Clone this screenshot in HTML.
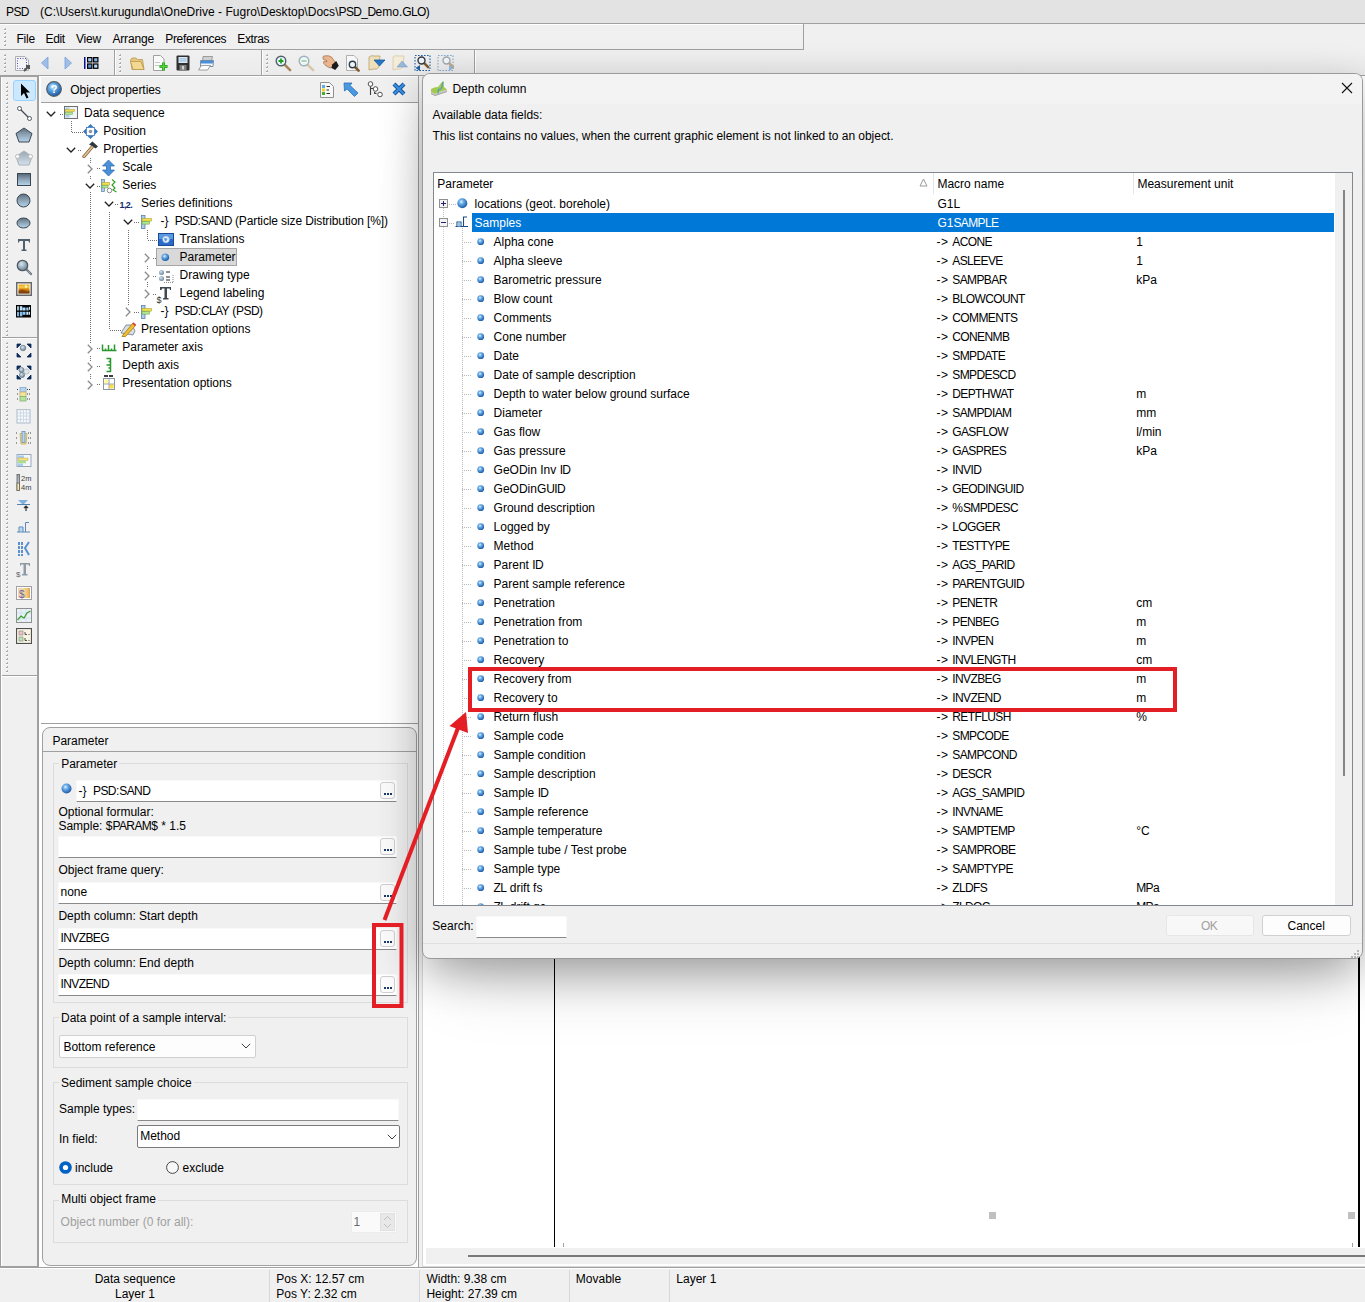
<!DOCTYPE html>
<html><head><meta charset="utf-8"><title>PSD</title>
<style>
html,body{margin:0;padding:0;}
body{width:1365px;height:1302px;position:relative;overflow:hidden;background:#f0f0f0;font-family:"Liberation Sans",sans-serif;font-size:12px;line-height:18px;color:#000;}
div{white-space:nowrap;}
</style></head><body>
<div style="position:absolute;left:0px;top:0px;width:1365px;height:23px;background:#e3e3e3"></div>
<div style="position:absolute;left:0px;top:23px;width:1365px;height:1px;background:#a0a0a0"></div>
<div style="position:absolute;left:6px;top:3.14px;font-size:12px;color:#000;letter-spacing:0px"><span style="letter-spacing:-0.6px">PSD</span></div>
<div style="position:absolute;left:40px;top:3.14px;font-size:12px;color:#000;letter-spacing:0.02px">(C:\Users\t.kurugundla\OneDrive - Fugro\Desktop\Docs\<span style="letter-spacing:-0.6px">PSD_D</span>emo.<span style="letter-spacing:-0.6px">GLO</span>)</div>
<div style="position:absolute;left:0px;top:24px;width:1365px;height:51px;background:linear-gradient(#f0f0f0 0%,#f0f0f0 60%,#e9e9e9 100%)"></div>
<div style="position:absolute;left:0px;top:24px;width:803px;height:25px;background:#f0f0f0;border-top:1px solid #fff;box-sizing:border-box"></div>
<div style="position:absolute;left:803px;top:24px;width:1px;height:26px;background:#a0a0a0"></div>
<div style="position:absolute;left:0px;top:49px;width:804px;height:1px;background:#a0a0a0"></div>
<div style="position:absolute;left:5px;top:28px;width:1px;height:1px;background:#b8b8b8"></div>
<div style="position:absolute;left:4px;top:29px;width:2px;height:1px;background:#a8a8a8"></div>
<div style="position:absolute;left:4px;top:30px;width:2px;height:1px;background:#fafafa"></div>
<div style="position:absolute;left:5px;top:32px;width:1px;height:1px;background:#b8b8b8"></div>
<div style="position:absolute;left:4px;top:33px;width:2px;height:1px;background:#a8a8a8"></div>
<div style="position:absolute;left:4px;top:34px;width:2px;height:1px;background:#fafafa"></div>
<div style="position:absolute;left:5px;top:36px;width:1px;height:1px;background:#b8b8b8"></div>
<div style="position:absolute;left:4px;top:37px;width:2px;height:1px;background:#a8a8a8"></div>
<div style="position:absolute;left:4px;top:38px;width:2px;height:1px;background:#fafafa"></div>
<div style="position:absolute;left:5px;top:40px;width:1px;height:1px;background:#b8b8b8"></div>
<div style="position:absolute;left:4px;top:41px;width:2px;height:1px;background:#a8a8a8"></div>
<div style="position:absolute;left:4px;top:42px;width:2px;height:1px;background:#fafafa"></div>
<div style="position:absolute;left:5px;top:44px;width:1px;height:1px;background:#b8b8b8"></div>
<div style="position:absolute;left:4px;top:45px;width:2px;height:1px;background:#a8a8a8"></div>
<div style="position:absolute;left:4px;top:46px;width:2px;height:1px;background:#fafafa"></div>
<div style="position:absolute;left:16.4px;top:30.24px;font-size:12px;color:#000;letter-spacing:-0.15px">File</div>
<div style="position:absolute;left:45.5px;top:30.24px;font-size:12px;color:#000;letter-spacing:-0.35px">Edit</div>
<div style="position:absolute;left:75.9px;top:30.24px;font-size:12px;color:#000;letter-spacing:-0.15px">View</div>
<div style="position:absolute;left:112.4px;top:30.24px;font-size:12px;color:#000;letter-spacing:-0.15px">Arrange</div>
<div style="position:absolute;left:165.3px;top:30.24px;font-size:12px;color:#000;letter-spacing:-0.35px">Preferences</div>
<div style="position:absolute;left:237.3px;top:30.24px;font-size:12px;color:#000;letter-spacing:-0.35px">Extras</div>
<div style="position:absolute;left:0px;top:50px;width:1365px;height:25px;background:linear-gradient(#f0f0f0,#ebebeb)"></div>
<div style="position:absolute;left:0px;top:75px;width:1365px;height:1px;background:#a0a0a0"></div>
<div style="position:absolute;left:114px;top:50px;width:1px;height:25px;background:#a0a0a0"></div>
<div style="position:absolute;left:115px;top:50px;width:1px;height:25px;background:#fff"></div>
<div style="position:absolute;left:261px;top:50px;width:1px;height:25px;background:#a0a0a0"></div>
<div style="position:absolute;left:262px;top:50px;width:1px;height:25px;background:#fff"></div>
<div style="position:absolute;left:474px;top:50px;width:1px;height:25px;background:#a0a0a0"></div>
<div style="position:absolute;left:475px;top:50px;width:1px;height:25px;background:#fff"></div>
<div style="position:absolute;left:5px;top:54px;width:1px;height:1px;background:#b8b8b8"></div>
<div style="position:absolute;left:4px;top:55px;width:2px;height:1px;background:#a8a8a8"></div>
<div style="position:absolute;left:4px;top:56px;width:2px;height:1px;background:#fafafa"></div>
<div style="position:absolute;left:5px;top:58px;width:1px;height:1px;background:#b8b8b8"></div>
<div style="position:absolute;left:4px;top:59px;width:2px;height:1px;background:#a8a8a8"></div>
<div style="position:absolute;left:4px;top:60px;width:2px;height:1px;background:#fafafa"></div>
<div style="position:absolute;left:5px;top:62px;width:1px;height:1px;background:#b8b8b8"></div>
<div style="position:absolute;left:4px;top:63px;width:2px;height:1px;background:#a8a8a8"></div>
<div style="position:absolute;left:4px;top:64px;width:2px;height:1px;background:#fafafa"></div>
<div style="position:absolute;left:5px;top:66px;width:1px;height:1px;background:#b8b8b8"></div>
<div style="position:absolute;left:4px;top:67px;width:2px;height:1px;background:#a8a8a8"></div>
<div style="position:absolute;left:4px;top:68px;width:2px;height:1px;background:#fafafa"></div>
<div style="position:absolute;left:5px;top:70px;width:1px;height:1px;background:#b8b8b8"></div>
<div style="position:absolute;left:4px;top:71px;width:2px;height:1px;background:#a8a8a8"></div>
<div style="position:absolute;left:4px;top:72px;width:2px;height:1px;background:#fafafa"></div>
<div style="position:absolute;left:120px;top:54px;width:1px;height:1px;background:#b8b8b8"></div>
<div style="position:absolute;left:119px;top:55px;width:2px;height:1px;background:#a8a8a8"></div>
<div style="position:absolute;left:119px;top:56px;width:2px;height:1px;background:#fafafa"></div>
<div style="position:absolute;left:120px;top:58px;width:1px;height:1px;background:#b8b8b8"></div>
<div style="position:absolute;left:119px;top:59px;width:2px;height:1px;background:#a8a8a8"></div>
<div style="position:absolute;left:119px;top:60px;width:2px;height:1px;background:#fafafa"></div>
<div style="position:absolute;left:120px;top:62px;width:1px;height:1px;background:#b8b8b8"></div>
<div style="position:absolute;left:119px;top:63px;width:2px;height:1px;background:#a8a8a8"></div>
<div style="position:absolute;left:119px;top:64px;width:2px;height:1px;background:#fafafa"></div>
<div style="position:absolute;left:120px;top:66px;width:1px;height:1px;background:#b8b8b8"></div>
<div style="position:absolute;left:119px;top:67px;width:2px;height:1px;background:#a8a8a8"></div>
<div style="position:absolute;left:119px;top:68px;width:2px;height:1px;background:#fafafa"></div>
<div style="position:absolute;left:120px;top:70px;width:1px;height:1px;background:#b8b8b8"></div>
<div style="position:absolute;left:119px;top:71px;width:2px;height:1px;background:#a8a8a8"></div>
<div style="position:absolute;left:119px;top:72px;width:2px;height:1px;background:#fafafa"></div>
<div style="position:absolute;left:267px;top:54px;width:1px;height:1px;background:#b8b8b8"></div>
<div style="position:absolute;left:266px;top:55px;width:2px;height:1px;background:#a8a8a8"></div>
<div style="position:absolute;left:266px;top:56px;width:2px;height:1px;background:#fafafa"></div>
<div style="position:absolute;left:267px;top:58px;width:1px;height:1px;background:#b8b8b8"></div>
<div style="position:absolute;left:266px;top:59px;width:2px;height:1px;background:#a8a8a8"></div>
<div style="position:absolute;left:266px;top:60px;width:2px;height:1px;background:#fafafa"></div>
<div style="position:absolute;left:267px;top:62px;width:1px;height:1px;background:#b8b8b8"></div>
<div style="position:absolute;left:266px;top:63px;width:2px;height:1px;background:#a8a8a8"></div>
<div style="position:absolute;left:266px;top:64px;width:2px;height:1px;background:#fafafa"></div>
<div style="position:absolute;left:267px;top:66px;width:1px;height:1px;background:#b8b8b8"></div>
<div style="position:absolute;left:266px;top:67px;width:2px;height:1px;background:#a8a8a8"></div>
<div style="position:absolute;left:266px;top:68px;width:2px;height:1px;background:#fafafa"></div>
<div style="position:absolute;left:267px;top:70px;width:1px;height:1px;background:#b8b8b8"></div>
<div style="position:absolute;left:266px;top:71px;width:2px;height:1px;background:#a8a8a8"></div>
<div style="position:absolute;left:266px;top:72px;width:2px;height:1px;background:#fafafa"></div>
<svg style="position:absolute;left:15px;top:56px" width="16" height="16" viewBox="0 0 16 16"><path d="M0.5 0.5H10L13.5 4V14.5H0.5Z" fill="#f4f4f6" stroke="#b0b0b0"/><rect x="2.5" y="2.5" width="9" height="10" fill="none" stroke="#5050b0" stroke-dasharray="1 1.5"/><path d="M9 15L13 11M11 10H14V13" stroke="#555" stroke-width="2" fill="none"/></svg>
<svg style="position:absolute;left:41px;top:57px" width="8" height="12" viewBox="0 0 8 12"><path d="M7 0L0.5 6L7 12Z" fill="#9fbfe8" stroke="#7aa0d8" stroke-width="0.8"/></svg>
<svg style="position:absolute;left:64px;top:57px" width="8" height="12" viewBox="0 0 8 12"><path d="M1 0L7.5 6L1 12Z" fill="#9fbfe8" stroke="#7aa0d8" stroke-width="0.8"/></svg>
<svg style="position:absolute;left:84px;top:57px" width="15" height="12" viewBox="0 0 15 12"><rect x="0" y="0" width="1.5" height="12" fill="#101090"/><rect x="3.6" y="0.6" width="4.3" height="4.3" fill="#a8d0f4" stroke="#000" stroke-width="1.2"/><rect x="9.6" y="0.6" width="4.3" height="4.3" fill="#80b0e8" stroke="#000" stroke-width="1.2"/><rect x="3.6" y="7" width="4.3" height="4.3" fill="#5b94d8" stroke="#000" stroke-width="1.2"/><rect x="9.6" y="7" width="4.3" height="4.3" fill="#b8dcf8" stroke="#000" stroke-width="1.2"/></svg>
<svg style="position:absolute;left:130px;top:57px" width="15" height="13" viewBox="0 0 15 13"><path d="M0.5 3L2 1H6L7.5 2.5H12.5L14 12.5H2Z" fill="#e8c878" stroke="#b89850" stroke-width="0.8"/><path d="M0.5 4.5H11L14 12.5H3Z" fill="#f2d890" stroke="#b89850" stroke-width="0.8"/></svg>
<svg style="position:absolute;left:153px;top:55px" width="15" height="16" viewBox="0 0 15 16"><path d="M0.5 0.5H7.5L11 4V15.5H0.5Z" fill="#fafafa" stroke="#a0a0a0"/><rect x="2" y="7" width="5" height="1" fill="#c8c8c8"/><rect x="2" y="10" width="4" height="1" fill="#c8c8c8"/><path d="M6.5 11.5H14.5M10.5 7.5V15.5" stroke="#20a020" stroke-width="3"/><path d="M6.5 11.5H14.5M10.5 7.5V15.5" stroke="#60d040" stroke-width="1.4"/></svg>
<svg style="position:absolute;left:176px;top:55px" width="14" height="16" viewBox="0 0 14 16"><rect x="0.5" y="0.5" width="13" height="15" rx="1" fill="#303030"/><rect x="2.5" y="2" width="9" height="6" fill="#dbe8f4"/><rect x="3.5" y="3.5" width="7" height="0.8" fill="#7aaad8"/><rect x="3.5" y="5.5" width="7" height="0.8" fill="#7aaad8"/><rect x="3.5" y="10" width="7" height="5.5" fill="#808080"/><rect x="6" y="11" width="2" height="3.5" fill="#d0d0d0"/></svg>
<svg style="position:absolute;left:198px;top:56px" width="17" height="15" viewBox="0 0 17 15"><path d="M5 0.5H14.5L13.5 5H4.5Z" fill="#d0d0d0" stroke="#8a8a8a" stroke-width="0.8"/><path d="M2.5 4.5H15.5L15 10.5H2.5Z" fill="#f4f6f8" stroke="#5a7898" stroke-width="0.8"/><path d="M3 4.8H15.2L14.8 7.5H3Z" fill="#4a90d8"/><path d="M3.5 9.5H12.5L9.5 14H0.5Z" fill="#fdfdfd" stroke="#8a8a8a" stroke-width="0.8"/></svg>
<svg style="position:absolute;left:275px;top:55px" width="17" height="17" viewBox="0 0 17 17"><line x1="9.36" y1="9.36" x2="15.12" y2="15.12" stroke="#a8845a" stroke-width="2.6" stroke-linecap="round"/><circle cx="6" cy="6" r="4.8" fill="#e8f4fb" stroke="#50606a" stroke-width="1.4"/><path d="M3.5 6H8.5M6 3.5V8.5" stroke="#20a020" stroke-width="1.8"/></svg>
<svg style="position:absolute;left:298px;top:55px" width="17" height="17" viewBox="0 0 17 17"><line x1="9.36" y1="9.36" x2="15.12" y2="15.12" stroke="#d8c8a8" stroke-width="2.6" stroke-linecap="round"/><circle cx="6" cy="6" r="4.8" fill="#eef6fa" stroke="#a0b0b8" stroke-width="1.4"/><path d="M3.5 6H8.5" stroke="#9ad09a" stroke-width="1.6"/></svg>
<svg style="position:absolute;left:322px;top:55px" width="17" height="16" viewBox="0 0 17 16"><path d="M0.8 3Q0.8 0.5 3.5 0.8H6.5L9.5 2L13.5 7.5L12.5 11.5L8 13L3.5 10.5L1.5 8Q1.2 6 3.2 6.2L5 7L4.2 5L1.8 4.8Z" fill="#eab48c" stroke="#9a6a48" stroke-width="0.7"/><path d="M10.2 9.5L14.2 6L16.8 10.8L13.2 15L9.5 13Z" fill="#1a1a1a"/></svg>
<svg style="position:absolute;left:346px;top:55px" width="15" height="17" viewBox="0 0 15 17"><path d="M0.5 0.5H8L11.5 4V15.5H0.5Z" fill="#f8f8fa" stroke="#b0b0b0"/><line x1="8.74" y1="11.74" x2="12.58" y2="15.58" stroke="#805a30" stroke-width="2.6" stroke-linecap="round"/><circle cx="6.5" cy="9.5" r="3.2" fill="#f0f4f8" stroke="#30404a" stroke-width="1.4"/></svg>
<svg style="position:absolute;left:368px;top:55px" width="17" height="16" viewBox="0 0 17 16"><path d="M1 2Q3 0 6 1H12L11 12Q9 15 5 14L1 15Z" fill="#f0e0b8" stroke="#b8a070" stroke-width="0.8"/><path d="M6 5H17L11.5 11Z" fill="#2878c8" stroke="#1858a0" stroke-width="0.8"/></svg>
<svg style="position:absolute;left:392px;top:55px" width="16" height="16" viewBox="0 0 16 16"><path d="M1 2Q3 0 6 1H12L11 12Q9 15 5 14L1 15Z" fill="#f4ecd8" stroke="#d8c8a8" stroke-width="0.8"/><path d="M5 12H15.5L10.2 6Z" fill="#98b8d8" stroke="#80a0c8" stroke-width="0.6"/></svg>
<svg style="position:absolute;left:414px;top:55px" width="17" height="17" viewBox="0 0 17 17"><rect x="1" y="0.5" width="15" height="15" fill="none" stroke="#2060a8" stroke-width="1.1" stroke-dasharray="1.6 1.4"/><line x1="9.95" y1="7.949999999999999" x2="14.149999999999999" y2="12.149999999999999" stroke="#805a30" stroke-width="2.6" stroke-linecap="round"/><circle cx="7.5" cy="5.5" r="3.5" fill="#f0f4f8" stroke="#303840" stroke-width="1.4"/><path d="M6 10V16L1.5 13Z" fill="#2060a8"/></svg>
<svg style="position:absolute;left:437px;top:55px" width="17" height="17" viewBox="0 0 17 17"><rect x="1" y="0.5" width="15" height="15" fill="none" stroke="#80a8d0" stroke-width="1.1" stroke-dasharray="1.6 1.4"/><line x1="11.95" y1="7.949999999999999" x2="16.15" y2="12.149999999999999" stroke="#c0a888" stroke-width="2.6" stroke-linecap="round"/><circle cx="9.5" cy="5.5" r="3.5" fill="#f4f6f8" stroke="#a0a8b0" stroke-width="1.4"/><path d="M12 10V16L16.5 13Z" fill="#90b8e0"/></svg>
<svg width="0" height="0" style="position:absolute"><defs>
<linearGradient id="gsteel" x1="0" y1="0" x2="0" y2="1"><stop offset="0" stop-color="#5d6f7e"/><stop offset="0.45" stop-color="#8aa0b2"/><stop offset="1" stop-color="#b6d4ec"/></linearGradient>
<linearGradient id="gsteel2" x1="0" y1="0" x2="0" y2="1"><stop offset="0" stop-color="#9aa6b0"/><stop offset="1" stop-color="#d4e2ee"/></linearGradient>
<radialGradient id="gball" cx="0.4" cy="0.35" r="0.65"><stop offset="0" stop-color="#e8f4ff"/><stop offset="0.35" stop-color="#6aaee8"/><stop offset="1" stop-color="#1c5aa8"/></radialGradient>
<radialGradient id="gball2" cx="0.4" cy="0.35" r="0.65"><stop offset="0" stop-color="#d8e6f0"/><stop offset="1" stop-color="#6a8498"/></radialGradient>
<linearGradient id="gsun" x1="0" y1="0" x2="0" y2="1"><stop offset="0" stop-color="#f8d060"/><stop offset="0.6" stop-color="#e89020"/><stop offset="1" stop-color="#703010"/></linearGradient>
</defs></svg>
<div style="position:absolute;left:0px;top:76px;width:39px;height:1191px;background:#f0f0f0"></div>
<div style="position:absolute;left:0px;top:76px;width:1px;height:1191px;background:#a0a0a0"></div>
<div style="position:absolute;left:1px;top:77px;width:1px;height:1189px;background:#fff"></div>
<div style="position:absolute;left:0px;top:76px;width:39px;height:1px;background:#a0a0a0"></div>
<div style="position:absolute;left:37px;top:76px;width:2px;height:1191px;background:#a0a0a0"></div>
<div style="position:absolute;left:0px;top:1266px;width:39px;height:1px;background:#a0a0a0"></div>
<div style="position:absolute;left:2px;top:337px;width:35px;height:1px;background:#a0a0a0"></div>
<div style="position:absolute;left:2px;top:338px;width:35px;height:1px;background:#fff"></div>
<div style="position:absolute;left:2px;top:675px;width:35px;height:1px;background:#a0a0a0"></div>
<div style="position:absolute;left:2px;top:676px;width:35px;height:1px;background:#fff"></div>
<div style="position:absolute;left:7px;top:82px;width:1px;height:1px;background:#b8b8b8"></div>
<div style="position:absolute;left:6px;top:83px;width:2px;height:1px;background:#a8a8a8"></div>
<div style="position:absolute;left:6px;top:84px;width:2px;height:1px;background:#fafafa"></div>
<div style="position:absolute;left:7px;top:86px;width:1px;height:1px;background:#b8b8b8"></div>
<div style="position:absolute;left:6px;top:87px;width:2px;height:1px;background:#a8a8a8"></div>
<div style="position:absolute;left:6px;top:88px;width:2px;height:1px;background:#fafafa"></div>
<div style="position:absolute;left:7px;top:90px;width:1px;height:1px;background:#b8b8b8"></div>
<div style="position:absolute;left:6px;top:91px;width:2px;height:1px;background:#a8a8a8"></div>
<div style="position:absolute;left:6px;top:92px;width:2px;height:1px;background:#fafafa"></div>
<div style="position:absolute;left:7px;top:94px;width:1px;height:1px;background:#b8b8b8"></div>
<div style="position:absolute;left:6px;top:95px;width:2px;height:1px;background:#a8a8a8"></div>
<div style="position:absolute;left:6px;top:96px;width:2px;height:1px;background:#fafafa"></div>
<div style="position:absolute;left:7px;top:98px;width:1px;height:1px;background:#b8b8b8"></div>
<div style="position:absolute;left:6px;top:99px;width:2px;height:1px;background:#a8a8a8"></div>
<div style="position:absolute;left:6px;top:100px;width:2px;height:1px;background:#fafafa"></div>
<div style="position:absolute;left:7px;top:102px;width:1px;height:1px;background:#b8b8b8"></div>
<div style="position:absolute;left:6px;top:103px;width:2px;height:1px;background:#a8a8a8"></div>
<div style="position:absolute;left:6px;top:104px;width:2px;height:1px;background:#fafafa"></div>
<div style="position:absolute;left:7px;top:106px;width:1px;height:1px;background:#b8b8b8"></div>
<div style="position:absolute;left:6px;top:107px;width:2px;height:1px;background:#a8a8a8"></div>
<div style="position:absolute;left:6px;top:108px;width:2px;height:1px;background:#fafafa"></div>
<div style="position:absolute;left:7px;top:110px;width:1px;height:1px;background:#b8b8b8"></div>
<div style="position:absolute;left:6px;top:111px;width:2px;height:1px;background:#a8a8a8"></div>
<div style="position:absolute;left:6px;top:112px;width:2px;height:1px;background:#fafafa"></div>
<div style="position:absolute;left:7px;top:114px;width:1px;height:1px;background:#b8b8b8"></div>
<div style="position:absolute;left:6px;top:115px;width:2px;height:1px;background:#a8a8a8"></div>
<div style="position:absolute;left:6px;top:116px;width:2px;height:1px;background:#fafafa"></div>
<div style="position:absolute;left:7px;top:118px;width:1px;height:1px;background:#b8b8b8"></div>
<div style="position:absolute;left:6px;top:119px;width:2px;height:1px;background:#a8a8a8"></div>
<div style="position:absolute;left:6px;top:120px;width:2px;height:1px;background:#fafafa"></div>
<div style="position:absolute;left:7px;top:122px;width:1px;height:1px;background:#b8b8b8"></div>
<div style="position:absolute;left:6px;top:123px;width:2px;height:1px;background:#a8a8a8"></div>
<div style="position:absolute;left:6px;top:124px;width:2px;height:1px;background:#fafafa"></div>
<div style="position:absolute;left:7px;top:126px;width:1px;height:1px;background:#b8b8b8"></div>
<div style="position:absolute;left:6px;top:127px;width:2px;height:1px;background:#a8a8a8"></div>
<div style="position:absolute;left:6px;top:128px;width:2px;height:1px;background:#fafafa"></div>
<div style="position:absolute;left:7px;top:130px;width:1px;height:1px;background:#b8b8b8"></div>
<div style="position:absolute;left:6px;top:131px;width:2px;height:1px;background:#a8a8a8"></div>
<div style="position:absolute;left:6px;top:132px;width:2px;height:1px;background:#fafafa"></div>
<div style="position:absolute;left:7px;top:134px;width:1px;height:1px;background:#b8b8b8"></div>
<div style="position:absolute;left:6px;top:135px;width:2px;height:1px;background:#a8a8a8"></div>
<div style="position:absolute;left:6px;top:136px;width:2px;height:1px;background:#fafafa"></div>
<div style="position:absolute;left:7px;top:138px;width:1px;height:1px;background:#b8b8b8"></div>
<div style="position:absolute;left:6px;top:139px;width:2px;height:1px;background:#a8a8a8"></div>
<div style="position:absolute;left:6px;top:140px;width:2px;height:1px;background:#fafafa"></div>
<div style="position:absolute;left:7px;top:142px;width:1px;height:1px;background:#b8b8b8"></div>
<div style="position:absolute;left:6px;top:143px;width:2px;height:1px;background:#a8a8a8"></div>
<div style="position:absolute;left:6px;top:144px;width:2px;height:1px;background:#fafafa"></div>
<div style="position:absolute;left:7px;top:146px;width:1px;height:1px;background:#b8b8b8"></div>
<div style="position:absolute;left:6px;top:147px;width:2px;height:1px;background:#a8a8a8"></div>
<div style="position:absolute;left:6px;top:148px;width:2px;height:1px;background:#fafafa"></div>
<div style="position:absolute;left:7px;top:150px;width:1px;height:1px;background:#b8b8b8"></div>
<div style="position:absolute;left:6px;top:151px;width:2px;height:1px;background:#a8a8a8"></div>
<div style="position:absolute;left:6px;top:152px;width:2px;height:1px;background:#fafafa"></div>
<div style="position:absolute;left:7px;top:154px;width:1px;height:1px;background:#b8b8b8"></div>
<div style="position:absolute;left:6px;top:155px;width:2px;height:1px;background:#a8a8a8"></div>
<div style="position:absolute;left:6px;top:156px;width:2px;height:1px;background:#fafafa"></div>
<div style="position:absolute;left:7px;top:158px;width:1px;height:1px;background:#b8b8b8"></div>
<div style="position:absolute;left:6px;top:159px;width:2px;height:1px;background:#a8a8a8"></div>
<div style="position:absolute;left:6px;top:160px;width:2px;height:1px;background:#fafafa"></div>
<div style="position:absolute;left:7px;top:162px;width:1px;height:1px;background:#b8b8b8"></div>
<div style="position:absolute;left:6px;top:163px;width:2px;height:1px;background:#a8a8a8"></div>
<div style="position:absolute;left:6px;top:164px;width:2px;height:1px;background:#fafafa"></div>
<div style="position:absolute;left:7px;top:166px;width:1px;height:1px;background:#b8b8b8"></div>
<div style="position:absolute;left:6px;top:167px;width:2px;height:1px;background:#a8a8a8"></div>
<div style="position:absolute;left:6px;top:168px;width:2px;height:1px;background:#fafafa"></div>
<div style="position:absolute;left:7px;top:170px;width:1px;height:1px;background:#b8b8b8"></div>
<div style="position:absolute;left:6px;top:171px;width:2px;height:1px;background:#a8a8a8"></div>
<div style="position:absolute;left:6px;top:172px;width:2px;height:1px;background:#fafafa"></div>
<div style="position:absolute;left:7px;top:174px;width:1px;height:1px;background:#b8b8b8"></div>
<div style="position:absolute;left:6px;top:175px;width:2px;height:1px;background:#a8a8a8"></div>
<div style="position:absolute;left:6px;top:176px;width:2px;height:1px;background:#fafafa"></div>
<div style="position:absolute;left:7px;top:178px;width:1px;height:1px;background:#b8b8b8"></div>
<div style="position:absolute;left:6px;top:179px;width:2px;height:1px;background:#a8a8a8"></div>
<div style="position:absolute;left:6px;top:180px;width:2px;height:1px;background:#fafafa"></div>
<div style="position:absolute;left:7px;top:182px;width:1px;height:1px;background:#b8b8b8"></div>
<div style="position:absolute;left:6px;top:183px;width:2px;height:1px;background:#a8a8a8"></div>
<div style="position:absolute;left:6px;top:184px;width:2px;height:1px;background:#fafafa"></div>
<div style="position:absolute;left:7px;top:186px;width:1px;height:1px;background:#b8b8b8"></div>
<div style="position:absolute;left:6px;top:187px;width:2px;height:1px;background:#a8a8a8"></div>
<div style="position:absolute;left:6px;top:188px;width:2px;height:1px;background:#fafafa"></div>
<div style="position:absolute;left:7px;top:190px;width:1px;height:1px;background:#b8b8b8"></div>
<div style="position:absolute;left:6px;top:191px;width:2px;height:1px;background:#a8a8a8"></div>
<div style="position:absolute;left:6px;top:192px;width:2px;height:1px;background:#fafafa"></div>
<div style="position:absolute;left:7px;top:194px;width:1px;height:1px;background:#b8b8b8"></div>
<div style="position:absolute;left:6px;top:195px;width:2px;height:1px;background:#a8a8a8"></div>
<div style="position:absolute;left:6px;top:196px;width:2px;height:1px;background:#fafafa"></div>
<div style="position:absolute;left:7px;top:198px;width:1px;height:1px;background:#b8b8b8"></div>
<div style="position:absolute;left:6px;top:199px;width:2px;height:1px;background:#a8a8a8"></div>
<div style="position:absolute;left:6px;top:200px;width:2px;height:1px;background:#fafafa"></div>
<div style="position:absolute;left:7px;top:202px;width:1px;height:1px;background:#b8b8b8"></div>
<div style="position:absolute;left:6px;top:203px;width:2px;height:1px;background:#a8a8a8"></div>
<div style="position:absolute;left:6px;top:204px;width:2px;height:1px;background:#fafafa"></div>
<div style="position:absolute;left:7px;top:206px;width:1px;height:1px;background:#b8b8b8"></div>
<div style="position:absolute;left:6px;top:207px;width:2px;height:1px;background:#a8a8a8"></div>
<div style="position:absolute;left:6px;top:208px;width:2px;height:1px;background:#fafafa"></div>
<div style="position:absolute;left:7px;top:210px;width:1px;height:1px;background:#b8b8b8"></div>
<div style="position:absolute;left:6px;top:211px;width:2px;height:1px;background:#a8a8a8"></div>
<div style="position:absolute;left:6px;top:212px;width:2px;height:1px;background:#fafafa"></div>
<div style="position:absolute;left:7px;top:214px;width:1px;height:1px;background:#b8b8b8"></div>
<div style="position:absolute;left:6px;top:215px;width:2px;height:1px;background:#a8a8a8"></div>
<div style="position:absolute;left:6px;top:216px;width:2px;height:1px;background:#fafafa"></div>
<div style="position:absolute;left:7px;top:218px;width:1px;height:1px;background:#b8b8b8"></div>
<div style="position:absolute;left:6px;top:219px;width:2px;height:1px;background:#a8a8a8"></div>
<div style="position:absolute;left:6px;top:220px;width:2px;height:1px;background:#fafafa"></div>
<div style="position:absolute;left:7px;top:222px;width:1px;height:1px;background:#b8b8b8"></div>
<div style="position:absolute;left:6px;top:223px;width:2px;height:1px;background:#a8a8a8"></div>
<div style="position:absolute;left:6px;top:224px;width:2px;height:1px;background:#fafafa"></div>
<div style="position:absolute;left:7px;top:226px;width:1px;height:1px;background:#b8b8b8"></div>
<div style="position:absolute;left:6px;top:227px;width:2px;height:1px;background:#a8a8a8"></div>
<div style="position:absolute;left:6px;top:228px;width:2px;height:1px;background:#fafafa"></div>
<div style="position:absolute;left:7px;top:230px;width:1px;height:1px;background:#b8b8b8"></div>
<div style="position:absolute;left:6px;top:231px;width:2px;height:1px;background:#a8a8a8"></div>
<div style="position:absolute;left:6px;top:232px;width:2px;height:1px;background:#fafafa"></div>
<div style="position:absolute;left:7px;top:234px;width:1px;height:1px;background:#b8b8b8"></div>
<div style="position:absolute;left:6px;top:235px;width:2px;height:1px;background:#a8a8a8"></div>
<div style="position:absolute;left:6px;top:236px;width:2px;height:1px;background:#fafafa"></div>
<div style="position:absolute;left:7px;top:238px;width:1px;height:1px;background:#b8b8b8"></div>
<div style="position:absolute;left:6px;top:239px;width:2px;height:1px;background:#a8a8a8"></div>
<div style="position:absolute;left:6px;top:240px;width:2px;height:1px;background:#fafafa"></div>
<div style="position:absolute;left:7px;top:242px;width:1px;height:1px;background:#b8b8b8"></div>
<div style="position:absolute;left:6px;top:243px;width:2px;height:1px;background:#a8a8a8"></div>
<div style="position:absolute;left:6px;top:244px;width:2px;height:1px;background:#fafafa"></div>
<div style="position:absolute;left:7px;top:246px;width:1px;height:1px;background:#b8b8b8"></div>
<div style="position:absolute;left:6px;top:247px;width:2px;height:1px;background:#a8a8a8"></div>
<div style="position:absolute;left:6px;top:248px;width:2px;height:1px;background:#fafafa"></div>
<div style="position:absolute;left:7px;top:250px;width:1px;height:1px;background:#b8b8b8"></div>
<div style="position:absolute;left:6px;top:251px;width:2px;height:1px;background:#a8a8a8"></div>
<div style="position:absolute;left:6px;top:252px;width:2px;height:1px;background:#fafafa"></div>
<div style="position:absolute;left:7px;top:254px;width:1px;height:1px;background:#b8b8b8"></div>
<div style="position:absolute;left:6px;top:255px;width:2px;height:1px;background:#a8a8a8"></div>
<div style="position:absolute;left:6px;top:256px;width:2px;height:1px;background:#fafafa"></div>
<div style="position:absolute;left:7px;top:258px;width:1px;height:1px;background:#b8b8b8"></div>
<div style="position:absolute;left:6px;top:259px;width:2px;height:1px;background:#a8a8a8"></div>
<div style="position:absolute;left:6px;top:260px;width:2px;height:1px;background:#fafafa"></div>
<div style="position:absolute;left:7px;top:262px;width:1px;height:1px;background:#b8b8b8"></div>
<div style="position:absolute;left:6px;top:263px;width:2px;height:1px;background:#a8a8a8"></div>
<div style="position:absolute;left:6px;top:264px;width:2px;height:1px;background:#fafafa"></div>
<div style="position:absolute;left:7px;top:266px;width:1px;height:1px;background:#b8b8b8"></div>
<div style="position:absolute;left:6px;top:267px;width:2px;height:1px;background:#a8a8a8"></div>
<div style="position:absolute;left:6px;top:268px;width:2px;height:1px;background:#fafafa"></div>
<div style="position:absolute;left:7px;top:270px;width:1px;height:1px;background:#b8b8b8"></div>
<div style="position:absolute;left:6px;top:271px;width:2px;height:1px;background:#a8a8a8"></div>
<div style="position:absolute;left:6px;top:272px;width:2px;height:1px;background:#fafafa"></div>
<div style="position:absolute;left:7px;top:274px;width:1px;height:1px;background:#b8b8b8"></div>
<div style="position:absolute;left:6px;top:275px;width:2px;height:1px;background:#a8a8a8"></div>
<div style="position:absolute;left:6px;top:276px;width:2px;height:1px;background:#fafafa"></div>
<div style="position:absolute;left:7px;top:278px;width:1px;height:1px;background:#b8b8b8"></div>
<div style="position:absolute;left:6px;top:279px;width:2px;height:1px;background:#a8a8a8"></div>
<div style="position:absolute;left:6px;top:280px;width:2px;height:1px;background:#fafafa"></div>
<div style="position:absolute;left:7px;top:282px;width:1px;height:1px;background:#b8b8b8"></div>
<div style="position:absolute;left:6px;top:283px;width:2px;height:1px;background:#a8a8a8"></div>
<div style="position:absolute;left:6px;top:284px;width:2px;height:1px;background:#fafafa"></div>
<div style="position:absolute;left:7px;top:286px;width:1px;height:1px;background:#b8b8b8"></div>
<div style="position:absolute;left:6px;top:287px;width:2px;height:1px;background:#a8a8a8"></div>
<div style="position:absolute;left:6px;top:288px;width:2px;height:1px;background:#fafafa"></div>
<div style="position:absolute;left:7px;top:290px;width:1px;height:1px;background:#b8b8b8"></div>
<div style="position:absolute;left:6px;top:291px;width:2px;height:1px;background:#a8a8a8"></div>
<div style="position:absolute;left:6px;top:292px;width:2px;height:1px;background:#fafafa"></div>
<div style="position:absolute;left:7px;top:294px;width:1px;height:1px;background:#b8b8b8"></div>
<div style="position:absolute;left:6px;top:295px;width:2px;height:1px;background:#a8a8a8"></div>
<div style="position:absolute;left:6px;top:296px;width:2px;height:1px;background:#fafafa"></div>
<div style="position:absolute;left:7px;top:298px;width:1px;height:1px;background:#b8b8b8"></div>
<div style="position:absolute;left:6px;top:299px;width:2px;height:1px;background:#a8a8a8"></div>
<div style="position:absolute;left:6px;top:300px;width:2px;height:1px;background:#fafafa"></div>
<div style="position:absolute;left:7px;top:302px;width:1px;height:1px;background:#b8b8b8"></div>
<div style="position:absolute;left:6px;top:303px;width:2px;height:1px;background:#a8a8a8"></div>
<div style="position:absolute;left:6px;top:304px;width:2px;height:1px;background:#fafafa"></div>
<div style="position:absolute;left:7px;top:306px;width:1px;height:1px;background:#b8b8b8"></div>
<div style="position:absolute;left:6px;top:307px;width:2px;height:1px;background:#a8a8a8"></div>
<div style="position:absolute;left:6px;top:308px;width:2px;height:1px;background:#fafafa"></div>
<div style="position:absolute;left:7px;top:310px;width:1px;height:1px;background:#b8b8b8"></div>
<div style="position:absolute;left:6px;top:311px;width:2px;height:1px;background:#a8a8a8"></div>
<div style="position:absolute;left:6px;top:312px;width:2px;height:1px;background:#fafafa"></div>
<div style="position:absolute;left:7px;top:314px;width:1px;height:1px;background:#b8b8b8"></div>
<div style="position:absolute;left:6px;top:315px;width:2px;height:1px;background:#a8a8a8"></div>
<div style="position:absolute;left:6px;top:316px;width:2px;height:1px;background:#fafafa"></div>
<div style="position:absolute;left:7px;top:318px;width:1px;height:1px;background:#b8b8b8"></div>
<div style="position:absolute;left:6px;top:319px;width:2px;height:1px;background:#a8a8a8"></div>
<div style="position:absolute;left:6px;top:320px;width:2px;height:1px;background:#fafafa"></div>
<div style="position:absolute;left:7px;top:322px;width:1px;height:1px;background:#b8b8b8"></div>
<div style="position:absolute;left:6px;top:323px;width:2px;height:1px;background:#a8a8a8"></div>
<div style="position:absolute;left:6px;top:324px;width:2px;height:1px;background:#fafafa"></div>
<div style="position:absolute;left:7px;top:326px;width:1px;height:1px;background:#b8b8b8"></div>
<div style="position:absolute;left:6px;top:327px;width:2px;height:1px;background:#a8a8a8"></div>
<div style="position:absolute;left:6px;top:328px;width:2px;height:1px;background:#fafafa"></div>
<div style="position:absolute;left:7px;top:330px;width:1px;height:1px;background:#b8b8b8"></div>
<div style="position:absolute;left:6px;top:331px;width:2px;height:1px;background:#a8a8a8"></div>
<div style="position:absolute;left:6px;top:332px;width:2px;height:1px;background:#fafafa"></div>
<div style="position:absolute;left:7px;top:334px;width:1px;height:1px;background:#b8b8b8"></div>
<div style="position:absolute;left:6px;top:335px;width:2px;height:1px;background:#a8a8a8"></div>
<div style="position:absolute;left:6px;top:336px;width:2px;height:1px;background:#fafafa"></div>
<div style="position:absolute;left:7px;top:342px;width:1px;height:1px;background:#b8b8b8"></div>
<div style="position:absolute;left:6px;top:343px;width:2px;height:1px;background:#a8a8a8"></div>
<div style="position:absolute;left:6px;top:344px;width:2px;height:1px;background:#fafafa"></div>
<div style="position:absolute;left:7px;top:346px;width:1px;height:1px;background:#b8b8b8"></div>
<div style="position:absolute;left:6px;top:347px;width:2px;height:1px;background:#a8a8a8"></div>
<div style="position:absolute;left:6px;top:348px;width:2px;height:1px;background:#fafafa"></div>
<div style="position:absolute;left:7px;top:350px;width:1px;height:1px;background:#b8b8b8"></div>
<div style="position:absolute;left:6px;top:351px;width:2px;height:1px;background:#a8a8a8"></div>
<div style="position:absolute;left:6px;top:352px;width:2px;height:1px;background:#fafafa"></div>
<div style="position:absolute;left:7px;top:354px;width:1px;height:1px;background:#b8b8b8"></div>
<div style="position:absolute;left:6px;top:355px;width:2px;height:1px;background:#a8a8a8"></div>
<div style="position:absolute;left:6px;top:356px;width:2px;height:1px;background:#fafafa"></div>
<div style="position:absolute;left:7px;top:358px;width:1px;height:1px;background:#b8b8b8"></div>
<div style="position:absolute;left:6px;top:359px;width:2px;height:1px;background:#a8a8a8"></div>
<div style="position:absolute;left:6px;top:360px;width:2px;height:1px;background:#fafafa"></div>
<div style="position:absolute;left:7px;top:362px;width:1px;height:1px;background:#b8b8b8"></div>
<div style="position:absolute;left:6px;top:363px;width:2px;height:1px;background:#a8a8a8"></div>
<div style="position:absolute;left:6px;top:364px;width:2px;height:1px;background:#fafafa"></div>
<div style="position:absolute;left:7px;top:366px;width:1px;height:1px;background:#b8b8b8"></div>
<div style="position:absolute;left:6px;top:367px;width:2px;height:1px;background:#a8a8a8"></div>
<div style="position:absolute;left:6px;top:368px;width:2px;height:1px;background:#fafafa"></div>
<div style="position:absolute;left:7px;top:370px;width:1px;height:1px;background:#b8b8b8"></div>
<div style="position:absolute;left:6px;top:371px;width:2px;height:1px;background:#a8a8a8"></div>
<div style="position:absolute;left:6px;top:372px;width:2px;height:1px;background:#fafafa"></div>
<div style="position:absolute;left:7px;top:374px;width:1px;height:1px;background:#b8b8b8"></div>
<div style="position:absolute;left:6px;top:375px;width:2px;height:1px;background:#a8a8a8"></div>
<div style="position:absolute;left:6px;top:376px;width:2px;height:1px;background:#fafafa"></div>
<div style="position:absolute;left:7px;top:378px;width:1px;height:1px;background:#b8b8b8"></div>
<div style="position:absolute;left:6px;top:379px;width:2px;height:1px;background:#a8a8a8"></div>
<div style="position:absolute;left:6px;top:380px;width:2px;height:1px;background:#fafafa"></div>
<div style="position:absolute;left:7px;top:382px;width:1px;height:1px;background:#b8b8b8"></div>
<div style="position:absolute;left:6px;top:383px;width:2px;height:1px;background:#a8a8a8"></div>
<div style="position:absolute;left:6px;top:384px;width:2px;height:1px;background:#fafafa"></div>
<div style="position:absolute;left:7px;top:386px;width:1px;height:1px;background:#b8b8b8"></div>
<div style="position:absolute;left:6px;top:387px;width:2px;height:1px;background:#a8a8a8"></div>
<div style="position:absolute;left:6px;top:388px;width:2px;height:1px;background:#fafafa"></div>
<div style="position:absolute;left:7px;top:390px;width:1px;height:1px;background:#b8b8b8"></div>
<div style="position:absolute;left:6px;top:391px;width:2px;height:1px;background:#a8a8a8"></div>
<div style="position:absolute;left:6px;top:392px;width:2px;height:1px;background:#fafafa"></div>
<div style="position:absolute;left:7px;top:394px;width:1px;height:1px;background:#b8b8b8"></div>
<div style="position:absolute;left:6px;top:395px;width:2px;height:1px;background:#a8a8a8"></div>
<div style="position:absolute;left:6px;top:396px;width:2px;height:1px;background:#fafafa"></div>
<div style="position:absolute;left:7px;top:398px;width:1px;height:1px;background:#b8b8b8"></div>
<div style="position:absolute;left:6px;top:399px;width:2px;height:1px;background:#a8a8a8"></div>
<div style="position:absolute;left:6px;top:400px;width:2px;height:1px;background:#fafafa"></div>
<div style="position:absolute;left:7px;top:402px;width:1px;height:1px;background:#b8b8b8"></div>
<div style="position:absolute;left:6px;top:403px;width:2px;height:1px;background:#a8a8a8"></div>
<div style="position:absolute;left:6px;top:404px;width:2px;height:1px;background:#fafafa"></div>
<div style="position:absolute;left:7px;top:406px;width:1px;height:1px;background:#b8b8b8"></div>
<div style="position:absolute;left:6px;top:407px;width:2px;height:1px;background:#a8a8a8"></div>
<div style="position:absolute;left:6px;top:408px;width:2px;height:1px;background:#fafafa"></div>
<div style="position:absolute;left:7px;top:410px;width:1px;height:1px;background:#b8b8b8"></div>
<div style="position:absolute;left:6px;top:411px;width:2px;height:1px;background:#a8a8a8"></div>
<div style="position:absolute;left:6px;top:412px;width:2px;height:1px;background:#fafafa"></div>
<div style="position:absolute;left:7px;top:414px;width:1px;height:1px;background:#b8b8b8"></div>
<div style="position:absolute;left:6px;top:415px;width:2px;height:1px;background:#a8a8a8"></div>
<div style="position:absolute;left:6px;top:416px;width:2px;height:1px;background:#fafafa"></div>
<div style="position:absolute;left:7px;top:418px;width:1px;height:1px;background:#b8b8b8"></div>
<div style="position:absolute;left:6px;top:419px;width:2px;height:1px;background:#a8a8a8"></div>
<div style="position:absolute;left:6px;top:420px;width:2px;height:1px;background:#fafafa"></div>
<div style="position:absolute;left:7px;top:422px;width:1px;height:1px;background:#b8b8b8"></div>
<div style="position:absolute;left:6px;top:423px;width:2px;height:1px;background:#a8a8a8"></div>
<div style="position:absolute;left:6px;top:424px;width:2px;height:1px;background:#fafafa"></div>
<div style="position:absolute;left:7px;top:426px;width:1px;height:1px;background:#b8b8b8"></div>
<div style="position:absolute;left:6px;top:427px;width:2px;height:1px;background:#a8a8a8"></div>
<div style="position:absolute;left:6px;top:428px;width:2px;height:1px;background:#fafafa"></div>
<div style="position:absolute;left:7px;top:430px;width:1px;height:1px;background:#b8b8b8"></div>
<div style="position:absolute;left:6px;top:431px;width:2px;height:1px;background:#a8a8a8"></div>
<div style="position:absolute;left:6px;top:432px;width:2px;height:1px;background:#fafafa"></div>
<div style="position:absolute;left:7px;top:434px;width:1px;height:1px;background:#b8b8b8"></div>
<div style="position:absolute;left:6px;top:435px;width:2px;height:1px;background:#a8a8a8"></div>
<div style="position:absolute;left:6px;top:436px;width:2px;height:1px;background:#fafafa"></div>
<div style="position:absolute;left:7px;top:438px;width:1px;height:1px;background:#b8b8b8"></div>
<div style="position:absolute;left:6px;top:439px;width:2px;height:1px;background:#a8a8a8"></div>
<div style="position:absolute;left:6px;top:440px;width:2px;height:1px;background:#fafafa"></div>
<div style="position:absolute;left:7px;top:442px;width:1px;height:1px;background:#b8b8b8"></div>
<div style="position:absolute;left:6px;top:443px;width:2px;height:1px;background:#a8a8a8"></div>
<div style="position:absolute;left:6px;top:444px;width:2px;height:1px;background:#fafafa"></div>
<div style="position:absolute;left:7px;top:446px;width:1px;height:1px;background:#b8b8b8"></div>
<div style="position:absolute;left:6px;top:447px;width:2px;height:1px;background:#a8a8a8"></div>
<div style="position:absolute;left:6px;top:448px;width:2px;height:1px;background:#fafafa"></div>
<div style="position:absolute;left:7px;top:450px;width:1px;height:1px;background:#b8b8b8"></div>
<div style="position:absolute;left:6px;top:451px;width:2px;height:1px;background:#a8a8a8"></div>
<div style="position:absolute;left:6px;top:452px;width:2px;height:1px;background:#fafafa"></div>
<div style="position:absolute;left:7px;top:454px;width:1px;height:1px;background:#b8b8b8"></div>
<div style="position:absolute;left:6px;top:455px;width:2px;height:1px;background:#a8a8a8"></div>
<div style="position:absolute;left:6px;top:456px;width:2px;height:1px;background:#fafafa"></div>
<div style="position:absolute;left:7px;top:458px;width:1px;height:1px;background:#b8b8b8"></div>
<div style="position:absolute;left:6px;top:459px;width:2px;height:1px;background:#a8a8a8"></div>
<div style="position:absolute;left:6px;top:460px;width:2px;height:1px;background:#fafafa"></div>
<div style="position:absolute;left:7px;top:462px;width:1px;height:1px;background:#b8b8b8"></div>
<div style="position:absolute;left:6px;top:463px;width:2px;height:1px;background:#a8a8a8"></div>
<div style="position:absolute;left:6px;top:464px;width:2px;height:1px;background:#fafafa"></div>
<div style="position:absolute;left:7px;top:466px;width:1px;height:1px;background:#b8b8b8"></div>
<div style="position:absolute;left:6px;top:467px;width:2px;height:1px;background:#a8a8a8"></div>
<div style="position:absolute;left:6px;top:468px;width:2px;height:1px;background:#fafafa"></div>
<div style="position:absolute;left:7px;top:470px;width:1px;height:1px;background:#b8b8b8"></div>
<div style="position:absolute;left:6px;top:471px;width:2px;height:1px;background:#a8a8a8"></div>
<div style="position:absolute;left:6px;top:472px;width:2px;height:1px;background:#fafafa"></div>
<div style="position:absolute;left:7px;top:474px;width:1px;height:1px;background:#b8b8b8"></div>
<div style="position:absolute;left:6px;top:475px;width:2px;height:1px;background:#a8a8a8"></div>
<div style="position:absolute;left:6px;top:476px;width:2px;height:1px;background:#fafafa"></div>
<div style="position:absolute;left:7px;top:478px;width:1px;height:1px;background:#b8b8b8"></div>
<div style="position:absolute;left:6px;top:479px;width:2px;height:1px;background:#a8a8a8"></div>
<div style="position:absolute;left:6px;top:480px;width:2px;height:1px;background:#fafafa"></div>
<div style="position:absolute;left:7px;top:482px;width:1px;height:1px;background:#b8b8b8"></div>
<div style="position:absolute;left:6px;top:483px;width:2px;height:1px;background:#a8a8a8"></div>
<div style="position:absolute;left:6px;top:484px;width:2px;height:1px;background:#fafafa"></div>
<div style="position:absolute;left:7px;top:486px;width:1px;height:1px;background:#b8b8b8"></div>
<div style="position:absolute;left:6px;top:487px;width:2px;height:1px;background:#a8a8a8"></div>
<div style="position:absolute;left:6px;top:488px;width:2px;height:1px;background:#fafafa"></div>
<div style="position:absolute;left:7px;top:490px;width:1px;height:1px;background:#b8b8b8"></div>
<div style="position:absolute;left:6px;top:491px;width:2px;height:1px;background:#a8a8a8"></div>
<div style="position:absolute;left:6px;top:492px;width:2px;height:1px;background:#fafafa"></div>
<div style="position:absolute;left:7px;top:494px;width:1px;height:1px;background:#b8b8b8"></div>
<div style="position:absolute;left:6px;top:495px;width:2px;height:1px;background:#a8a8a8"></div>
<div style="position:absolute;left:6px;top:496px;width:2px;height:1px;background:#fafafa"></div>
<div style="position:absolute;left:7px;top:498px;width:1px;height:1px;background:#b8b8b8"></div>
<div style="position:absolute;left:6px;top:499px;width:2px;height:1px;background:#a8a8a8"></div>
<div style="position:absolute;left:6px;top:500px;width:2px;height:1px;background:#fafafa"></div>
<div style="position:absolute;left:7px;top:502px;width:1px;height:1px;background:#b8b8b8"></div>
<div style="position:absolute;left:6px;top:503px;width:2px;height:1px;background:#a8a8a8"></div>
<div style="position:absolute;left:6px;top:504px;width:2px;height:1px;background:#fafafa"></div>
<div style="position:absolute;left:7px;top:506px;width:1px;height:1px;background:#b8b8b8"></div>
<div style="position:absolute;left:6px;top:507px;width:2px;height:1px;background:#a8a8a8"></div>
<div style="position:absolute;left:6px;top:508px;width:2px;height:1px;background:#fafafa"></div>
<div style="position:absolute;left:7px;top:510px;width:1px;height:1px;background:#b8b8b8"></div>
<div style="position:absolute;left:6px;top:511px;width:2px;height:1px;background:#a8a8a8"></div>
<div style="position:absolute;left:6px;top:512px;width:2px;height:1px;background:#fafafa"></div>
<div style="position:absolute;left:7px;top:514px;width:1px;height:1px;background:#b8b8b8"></div>
<div style="position:absolute;left:6px;top:515px;width:2px;height:1px;background:#a8a8a8"></div>
<div style="position:absolute;left:6px;top:516px;width:2px;height:1px;background:#fafafa"></div>
<div style="position:absolute;left:7px;top:518px;width:1px;height:1px;background:#b8b8b8"></div>
<div style="position:absolute;left:6px;top:519px;width:2px;height:1px;background:#a8a8a8"></div>
<div style="position:absolute;left:6px;top:520px;width:2px;height:1px;background:#fafafa"></div>
<div style="position:absolute;left:7px;top:522px;width:1px;height:1px;background:#b8b8b8"></div>
<div style="position:absolute;left:6px;top:523px;width:2px;height:1px;background:#a8a8a8"></div>
<div style="position:absolute;left:6px;top:524px;width:2px;height:1px;background:#fafafa"></div>
<div style="position:absolute;left:7px;top:526px;width:1px;height:1px;background:#b8b8b8"></div>
<div style="position:absolute;left:6px;top:527px;width:2px;height:1px;background:#a8a8a8"></div>
<div style="position:absolute;left:6px;top:528px;width:2px;height:1px;background:#fafafa"></div>
<div style="position:absolute;left:7px;top:530px;width:1px;height:1px;background:#b8b8b8"></div>
<div style="position:absolute;left:6px;top:531px;width:2px;height:1px;background:#a8a8a8"></div>
<div style="position:absolute;left:6px;top:532px;width:2px;height:1px;background:#fafafa"></div>
<div style="position:absolute;left:7px;top:534px;width:1px;height:1px;background:#b8b8b8"></div>
<div style="position:absolute;left:6px;top:535px;width:2px;height:1px;background:#a8a8a8"></div>
<div style="position:absolute;left:6px;top:536px;width:2px;height:1px;background:#fafafa"></div>
<div style="position:absolute;left:7px;top:538px;width:1px;height:1px;background:#b8b8b8"></div>
<div style="position:absolute;left:6px;top:539px;width:2px;height:1px;background:#a8a8a8"></div>
<div style="position:absolute;left:6px;top:540px;width:2px;height:1px;background:#fafafa"></div>
<div style="position:absolute;left:7px;top:542px;width:1px;height:1px;background:#b8b8b8"></div>
<div style="position:absolute;left:6px;top:543px;width:2px;height:1px;background:#a8a8a8"></div>
<div style="position:absolute;left:6px;top:544px;width:2px;height:1px;background:#fafafa"></div>
<div style="position:absolute;left:7px;top:546px;width:1px;height:1px;background:#b8b8b8"></div>
<div style="position:absolute;left:6px;top:547px;width:2px;height:1px;background:#a8a8a8"></div>
<div style="position:absolute;left:6px;top:548px;width:2px;height:1px;background:#fafafa"></div>
<div style="position:absolute;left:7px;top:550px;width:1px;height:1px;background:#b8b8b8"></div>
<div style="position:absolute;left:6px;top:551px;width:2px;height:1px;background:#a8a8a8"></div>
<div style="position:absolute;left:6px;top:552px;width:2px;height:1px;background:#fafafa"></div>
<div style="position:absolute;left:7px;top:554px;width:1px;height:1px;background:#b8b8b8"></div>
<div style="position:absolute;left:6px;top:555px;width:2px;height:1px;background:#a8a8a8"></div>
<div style="position:absolute;left:6px;top:556px;width:2px;height:1px;background:#fafafa"></div>
<div style="position:absolute;left:7px;top:558px;width:1px;height:1px;background:#b8b8b8"></div>
<div style="position:absolute;left:6px;top:559px;width:2px;height:1px;background:#a8a8a8"></div>
<div style="position:absolute;left:6px;top:560px;width:2px;height:1px;background:#fafafa"></div>
<div style="position:absolute;left:7px;top:562px;width:1px;height:1px;background:#b8b8b8"></div>
<div style="position:absolute;left:6px;top:563px;width:2px;height:1px;background:#a8a8a8"></div>
<div style="position:absolute;left:6px;top:564px;width:2px;height:1px;background:#fafafa"></div>
<div style="position:absolute;left:7px;top:566px;width:1px;height:1px;background:#b8b8b8"></div>
<div style="position:absolute;left:6px;top:567px;width:2px;height:1px;background:#a8a8a8"></div>
<div style="position:absolute;left:6px;top:568px;width:2px;height:1px;background:#fafafa"></div>
<div style="position:absolute;left:7px;top:570px;width:1px;height:1px;background:#b8b8b8"></div>
<div style="position:absolute;left:6px;top:571px;width:2px;height:1px;background:#a8a8a8"></div>
<div style="position:absolute;left:6px;top:572px;width:2px;height:1px;background:#fafafa"></div>
<div style="position:absolute;left:7px;top:574px;width:1px;height:1px;background:#b8b8b8"></div>
<div style="position:absolute;left:6px;top:575px;width:2px;height:1px;background:#a8a8a8"></div>
<div style="position:absolute;left:6px;top:576px;width:2px;height:1px;background:#fafafa"></div>
<div style="position:absolute;left:7px;top:578px;width:1px;height:1px;background:#b8b8b8"></div>
<div style="position:absolute;left:6px;top:579px;width:2px;height:1px;background:#a8a8a8"></div>
<div style="position:absolute;left:6px;top:580px;width:2px;height:1px;background:#fafafa"></div>
<div style="position:absolute;left:7px;top:582px;width:1px;height:1px;background:#b8b8b8"></div>
<div style="position:absolute;left:6px;top:583px;width:2px;height:1px;background:#a8a8a8"></div>
<div style="position:absolute;left:6px;top:584px;width:2px;height:1px;background:#fafafa"></div>
<div style="position:absolute;left:7px;top:586px;width:1px;height:1px;background:#b8b8b8"></div>
<div style="position:absolute;left:6px;top:587px;width:2px;height:1px;background:#a8a8a8"></div>
<div style="position:absolute;left:6px;top:588px;width:2px;height:1px;background:#fafafa"></div>
<div style="position:absolute;left:7px;top:590px;width:1px;height:1px;background:#b8b8b8"></div>
<div style="position:absolute;left:6px;top:591px;width:2px;height:1px;background:#a8a8a8"></div>
<div style="position:absolute;left:6px;top:592px;width:2px;height:1px;background:#fafafa"></div>
<div style="position:absolute;left:7px;top:594px;width:1px;height:1px;background:#b8b8b8"></div>
<div style="position:absolute;left:6px;top:595px;width:2px;height:1px;background:#a8a8a8"></div>
<div style="position:absolute;left:6px;top:596px;width:2px;height:1px;background:#fafafa"></div>
<div style="position:absolute;left:7px;top:598px;width:1px;height:1px;background:#b8b8b8"></div>
<div style="position:absolute;left:6px;top:599px;width:2px;height:1px;background:#a8a8a8"></div>
<div style="position:absolute;left:6px;top:600px;width:2px;height:1px;background:#fafafa"></div>
<div style="position:absolute;left:7px;top:602px;width:1px;height:1px;background:#b8b8b8"></div>
<div style="position:absolute;left:6px;top:603px;width:2px;height:1px;background:#a8a8a8"></div>
<div style="position:absolute;left:6px;top:604px;width:2px;height:1px;background:#fafafa"></div>
<div style="position:absolute;left:7px;top:606px;width:1px;height:1px;background:#b8b8b8"></div>
<div style="position:absolute;left:6px;top:607px;width:2px;height:1px;background:#a8a8a8"></div>
<div style="position:absolute;left:6px;top:608px;width:2px;height:1px;background:#fafafa"></div>
<div style="position:absolute;left:7px;top:610px;width:1px;height:1px;background:#b8b8b8"></div>
<div style="position:absolute;left:6px;top:611px;width:2px;height:1px;background:#a8a8a8"></div>
<div style="position:absolute;left:6px;top:612px;width:2px;height:1px;background:#fafafa"></div>
<div style="position:absolute;left:7px;top:614px;width:1px;height:1px;background:#b8b8b8"></div>
<div style="position:absolute;left:6px;top:615px;width:2px;height:1px;background:#a8a8a8"></div>
<div style="position:absolute;left:6px;top:616px;width:2px;height:1px;background:#fafafa"></div>
<div style="position:absolute;left:7px;top:618px;width:1px;height:1px;background:#b8b8b8"></div>
<div style="position:absolute;left:6px;top:619px;width:2px;height:1px;background:#a8a8a8"></div>
<div style="position:absolute;left:6px;top:620px;width:2px;height:1px;background:#fafafa"></div>
<div style="position:absolute;left:7px;top:622px;width:1px;height:1px;background:#b8b8b8"></div>
<div style="position:absolute;left:6px;top:623px;width:2px;height:1px;background:#a8a8a8"></div>
<div style="position:absolute;left:6px;top:624px;width:2px;height:1px;background:#fafafa"></div>
<div style="position:absolute;left:7px;top:626px;width:1px;height:1px;background:#b8b8b8"></div>
<div style="position:absolute;left:6px;top:627px;width:2px;height:1px;background:#a8a8a8"></div>
<div style="position:absolute;left:6px;top:628px;width:2px;height:1px;background:#fafafa"></div>
<div style="position:absolute;left:7px;top:630px;width:1px;height:1px;background:#b8b8b8"></div>
<div style="position:absolute;left:6px;top:631px;width:2px;height:1px;background:#a8a8a8"></div>
<div style="position:absolute;left:6px;top:632px;width:2px;height:1px;background:#fafafa"></div>
<div style="position:absolute;left:7px;top:634px;width:1px;height:1px;background:#b8b8b8"></div>
<div style="position:absolute;left:6px;top:635px;width:2px;height:1px;background:#a8a8a8"></div>
<div style="position:absolute;left:6px;top:636px;width:2px;height:1px;background:#fafafa"></div>
<div style="position:absolute;left:7px;top:638px;width:1px;height:1px;background:#b8b8b8"></div>
<div style="position:absolute;left:6px;top:639px;width:2px;height:1px;background:#a8a8a8"></div>
<div style="position:absolute;left:6px;top:640px;width:2px;height:1px;background:#fafafa"></div>
<div style="position:absolute;left:7px;top:642px;width:1px;height:1px;background:#b8b8b8"></div>
<div style="position:absolute;left:6px;top:643px;width:2px;height:1px;background:#a8a8a8"></div>
<div style="position:absolute;left:6px;top:644px;width:2px;height:1px;background:#fafafa"></div>
<div style="position:absolute;left:7px;top:646px;width:1px;height:1px;background:#b8b8b8"></div>
<div style="position:absolute;left:6px;top:647px;width:2px;height:1px;background:#a8a8a8"></div>
<div style="position:absolute;left:6px;top:648px;width:2px;height:1px;background:#fafafa"></div>
<div style="position:absolute;left:7px;top:650px;width:1px;height:1px;background:#b8b8b8"></div>
<div style="position:absolute;left:6px;top:651px;width:2px;height:1px;background:#a8a8a8"></div>
<div style="position:absolute;left:6px;top:652px;width:2px;height:1px;background:#fafafa"></div>
<div style="position:absolute;left:7px;top:654px;width:1px;height:1px;background:#b8b8b8"></div>
<div style="position:absolute;left:6px;top:655px;width:2px;height:1px;background:#a8a8a8"></div>
<div style="position:absolute;left:6px;top:656px;width:2px;height:1px;background:#fafafa"></div>
<div style="position:absolute;left:7px;top:658px;width:1px;height:1px;background:#b8b8b8"></div>
<div style="position:absolute;left:6px;top:659px;width:2px;height:1px;background:#a8a8a8"></div>
<div style="position:absolute;left:6px;top:660px;width:2px;height:1px;background:#fafafa"></div>
<div style="position:absolute;left:7px;top:662px;width:1px;height:1px;background:#b8b8b8"></div>
<div style="position:absolute;left:6px;top:663px;width:2px;height:1px;background:#a8a8a8"></div>
<div style="position:absolute;left:6px;top:664px;width:2px;height:1px;background:#fafafa"></div>
<div style="position:absolute;left:7px;top:666px;width:1px;height:1px;background:#b8b8b8"></div>
<div style="position:absolute;left:6px;top:667px;width:2px;height:1px;background:#a8a8a8"></div>
<div style="position:absolute;left:6px;top:668px;width:2px;height:1px;background:#fafafa"></div>
<div style="position:absolute;left:7px;top:670px;width:1px;height:1px;background:#b8b8b8"></div>
<div style="position:absolute;left:6px;top:671px;width:2px;height:1px;background:#a8a8a8"></div>
<div style="position:absolute;left:6px;top:672px;width:2px;height:1px;background:#fafafa"></div>
<div style="position:absolute;left:13px;top:80px;width:23px;height:21px;background:#cce8ff;border:1px solid #99d1ff;box-sizing:border-box;border-radius:3px"></div>
<svg style="position:absolute;left:20px;top:83px" width="11" height="17" viewBox="0 0 11 17"><path d="M1 0.5V13L4 10L6.5 15.5L8.5 14.5L6 9.5H10Z" fill="#000"/></svg>
<svg style="position:absolute;left:16px;top:105px" width="17" height="17" viewBox="0 0 17 17"><line x1="3.5" y1="3.5" x2="13.5" y2="13.5" stroke="#404850" stroke-width="1.2"/><circle cx="3.5" cy="3.5" r="2" fill="#fff" stroke="#505860"/><circle cx="13.5" cy="13.5" r="2" fill="#fff" stroke="#505860"/></svg>
<svg style="position:absolute;left:15px;top:127px" width="18" height="16" viewBox="0 0 18 16"><path d="M9 1L17 6.5L14 15H4L1 6.5Z" fill="url(#gsteel)" stroke="#3a4650" stroke-width="1"/></svg>
<svg style="position:absolute;left:15px;top:150px" width="18" height="16" viewBox="0 0 18 16"><path d="M9 1L17 6.5L14 15H4L1 6.5Z" fill="url(#gsteel2)" stroke="#a8b0b8" stroke-width="1"/><circle cx="2.5" cy="6.5" r="2" fill="#fff" stroke="#b8b8b8"/><circle cx="15.5" cy="6.5" r="2" fill="#fff" stroke="#b8b8b8"/></svg>
<div style="position:absolute;left:17px;top:173px;width:14px;height:13px;background:linear-gradient(#5a6c7a,#8ea4b6 50%,#b4d2ea);border:1px solid #3a4650;box-sizing:border-box"></div>
<svg style="position:absolute;left:16px;top:193px" width="16" height="16" viewBox="0 0 16 16"><circle cx="7.5" cy="7.5" r="6.5" fill="url(#gsteel)" stroke="#3a4650"/></svg>
<svg style="position:absolute;left:16px;top:217px" width="16" height="13" viewBox="0 0 16 13"><ellipse cx="7.5" cy="6" rx="6.5" ry="5" fill="url(#gsteel)" stroke="#3a4650"/></svg>
<svg style="position:absolute;left:17px;top:238px" width="14" height="14" viewBox="0 0 14 14"><path d="M1 1H13V4.5H12L11.5 3H8V11.5H9.5V13H4.5V11.5H6V3H2.5L2 4.5H1Z" fill="#50606c"/></svg>
<svg style="position:absolute;left:16px;top:259px" width="17" height="17" viewBox="0 0 17 17"><line x1="9" y1="9" x2="15" y2="15" stroke="#707880" stroke-width="2.4" stroke-linecap="round"/><line x1="9" y1="9" x2="15" y2="15" stroke="#d0d4d8" stroke-width="0.8" stroke-dasharray="1 1"/><circle cx="6.5" cy="6.5" r="5.2" fill="url(#gball2)" stroke="#505860" stroke-width="1.3"/></svg>
<svg style="position:absolute;left:16px;top:282px" width="16" height="14" viewBox="0 0 16 14"><defs><linearGradient id="gsunset" x1="0" y1="0" x2="0" y2="1"><stop offset="0" stop-color="#e8a020"/><stop offset="0.3" stop-color="#f8d040"/><stop offset="0.55" stop-color="#d88010"/><stop offset="1" stop-color="#804008"/></linearGradient></defs><rect x="0.75" y="0.75" width="14.5" height="12.5" fill="#fff" stroke="#686868" stroke-width="1.5"/><rect x="2.5" y="2.5" width="11" height="9" fill="url(#gsunset)"/><circle cx="10" cy="4.5" r="1.3" fill="#fff8d0"/><path d="M2.5 9Q6 6.5 9 8.5T13.5 8.5V11.5H2.5Z" fill="#6a3a10" opacity="0.6"/></svg>
<svg style="position:absolute;left:16px;top:305px" width="16" height="13" viewBox="0 0 16 13"><rect x="0" y="0" width="15" height="12.5" fill="#000"/><rect x="1.2" y="1.2" width="1.6" height="4.3" fill="#c8e8ff"/><rect x="1.2" y="6.8" width="1.6" height="4.5" fill="#a8d4f8"/><rect x="3.8" y="1.2" width="2.5" height="4.3" fill="#b8e0ff"/><rect x="3.8" y="6.8" width="2.5" height="4.5" fill="#80c0f0"/><rect x="6.5" y="2.5" width="3" height="3" fill="#b8e0ff"/><rect x="6.5" y="6.8" width="3" height="3" fill="#90c8f4"/><rect x="10.3" y="2.5" width="2.2" height="3" fill="#a0d0f8"/><rect x="10.3" y="6.8" width="2.2" height="3" fill="#c8e8ff"/><rect x="13" y="1.8" width="1" height="3" fill="#c8e8ff"/><rect x="13" y="6.8" width="1" height="3" fill="#c8e8ff"/></svg>
<svg style="position:absolute;left:16px;top:343px" width="16" height="15" viewBox="0 0 16 15"><path d="M1 1H5L1 5ZM15 1H11L15 5ZM15 14H11L15 10ZM1 14H5L1 10Z" fill="#0a2a58" stroke="#0a2a58" stroke-width="0.8" stroke-linejoin="round"/><circle cx="7" cy="5" r="2.8" fill="url(#gball2)" stroke="#607080" stroke-width="0.6"/></svg>
<svg style="position:absolute;left:16px;top:365px" width="16" height="15" viewBox="0 0 16 15"><path d="M1 1H5L1 5ZM15 1H11L15 5ZM15 14H11L15 10ZM1 14H5L1 10Z" fill="#0a2a58" stroke="#0a2a58" stroke-width="0.8" stroke-linejoin="round"/><circle cx="5.5" cy="5" r="2.6" fill="url(#gball2)" stroke="#607080" stroke-width="0.6"/><circle cx="10.5" cy="6.5" r="2.6" fill="#dde4ea" stroke="#a0aab4" stroke-width="0.6"/><circle cx="6" cy="10" r="2.6" fill="url(#gball2)" stroke="#607080" stroke-width="0.6"/></svg>
<svg style="position:absolute;left:16px;top:387px" width="16" height="15" viewBox="0 0 16 15"><rect x="4" y="0.5" width="6" height="4.5" fill="#b4d4f4" stroke="#88a8c8" stroke-width="0.8"/><rect x="4" y="5" width="6" height="4.5" fill="#f4e498" stroke="#c0b070" stroke-width="0.8"/><rect x="4" y="9.5" width="6" height="4.5" fill="#b4e4a0" stroke="#88b070" stroke-width="0.8"/><path d="M1 2.5H2M1 7H2M1 12H2M11 2.5H14M11 7H14M11 12H14" stroke="#404040" stroke-dasharray="1 1"/></svg>
<svg style="position:absolute;left:16px;top:409px" width="15" height="15" viewBox="0 0 15 15"><rect x="1" y="0.5" width="13" height="13.5" fill="#f4f8fc" stroke="#b8c4d0" stroke-width="1.2"/><path d="M4.5 1V14M7.5 1V14M10.5 1V14M1 4H14M1 7H14M1 10.5H14" stroke="#c8d4e0" stroke-width="0.8"/></svg>
<svg style="position:absolute;left:16px;top:431px" width="16" height="15" viewBox="0 0 16 15"><path d="M4 2.5H11L10 13H5Z" fill="#f4e498" stroke="#c0a850" stroke-width="0.8"/><rect x="6" y="0.5" width="3" height="11" fill="#b4d4f4" stroke="#6890b8" stroke-width="0.8"/><path d="M0 2H2M0 7H2M0 12H2M12 2H15M12 7H15M12 12H15" stroke="#404040" stroke-dasharray="1 1"/></svg>
<svg style="position:absolute;left:16px;top:454px" width="16" height="13" viewBox="0 0 16 13"><rect x="1" y="0.5" width="14" height="12" fill="#f4f8fc" stroke="#98a8b8" stroke-width="1"/><rect x="2" y="1.5" width="6" height="2.5" fill="#a8ccf0"/><rect x="2" y="4" width="10" height="2.5" fill="#f0e080" stroke="#c0a850" stroke-width="0.5"/><rect x="2" y="6.8" width="8" height="2.5" fill="#a8e090"/><rect x="2" y="9.5" width="5" height="2.5" fill="#a8ccf0"/></svg>
<svg style="position:absolute;left:16px;top:474px" width="16" height="17" viewBox="0 0 16 17"><rect x="1" y="0.5" width="2.5" height="16" fill="url(#gsteel2)" stroke="#606060" stroke-width="0.8"/><rect x="1" y="9" width="2.5" height="7.5" fill="#f8e8a0" stroke="#606060" stroke-width="0.8"/><text x="5" y="7" font-family="Liberation Sans" font-size="7.5" fill="#404040">2m</text><text x="5" y="16" font-family="Liberation Sans" font-size="7.5" fill="#404040">4m</text></svg>
<svg style="position:absolute;left:16px;top:499px" width="15" height="13" viewBox="0 0 15 13"><path d="M2 1H12L7 6Z" fill="#80b0e0"/><path d="M1 5.5H14" stroke="#5080b0" stroke-width="1"/><path d="M10 12V7M8 9L10 7L12 9" stroke="#303030" stroke-width="1.2" fill="none"/></svg>
<svg style="position:absolute;left:16px;top:521px" width="15" height="12" viewBox="0 0 15 12"><rect x="3.5" y="6.5" width="3.5" height="4" fill="#b8d8f0"/><path d="M1 11H14M3 11V6H7V11M9.5 11V1.5H13" fill="none" stroke="#5a88b8" stroke-width="1"/></svg>
<svg style="position:absolute;left:17px;top:541px" width="14" height="16" viewBox="0 0 14 16"><path d="M2 1V15M5 1V15" stroke="#5a90d0" stroke-width="2" stroke-dasharray="3 1"/><path d="M12 1L8 7L12 14" fill="none" stroke="#5a90d0" stroke-width="2"/></svg>
<svg style="position:absolute;left:16px;top:561px" width="15" height="17" viewBox="0 0 15 17"><path d="M4 2H14V5H13L12.5 3.5H10V13H11.5V14.5H6V13H7.5V3.5H5L4.5 5H4Z" fill="#909aa4"/><text x="0" y="16" font-family="Liberation Sans" font-size="8" fill="#606870">$</text></svg>
<div style="position:absolute;left:16px;top:586px;width:16px;height:14px;background:linear-gradient(90deg,#e8d8b8,#f0d8a0 50%,#f4c070 75%,#c89860);border:1px solid #a0a0a0;box-shadow:inset 0 0 0 1px #fff;box-sizing:border-box"></div>
<div style="position:absolute;left:19px;top:586.03px;font-size:10px;color:#7060a0;">$</div>
<svg style="position:absolute;left:16px;top:608px" width="16" height="15" viewBox="0 0 16 15"><rect x="0.5" y="0.5" width="15" height="14" fill="#e8f0f8" stroke="#909090"/><path d="M1 5H15M1 10H15M5 1V14M10 1V14" stroke="#c8d8e8" stroke-width="0.6"/><path d="M1.5 12L5 8L8 10L11 5L14.5 3" fill="none" stroke="#40a030" stroke-width="1.3"/></svg>
<svg style="position:absolute;left:16px;top:628px" width="16" height="16" viewBox="0 0 16 16"><rect x="0.5" y="0.5" width="15" height="15" fill="#f8f4e4" stroke="#505050" stroke-width="1.2"/><rect x="3" y="3" width="4" height="4" fill="#f4c0c8" stroke="#808080" stroke-width="0.6"/><rect x="3" y="9" width="4" height="4" fill="#b8e8b0" stroke="#808080" stroke-width="0.6"/><path d="M9 4V6.5H11M12.5 6.5H13.5M9 10V12.5H11M12.5 12.5H13.5" fill="none" stroke="#404040" stroke-width="0.9"/></svg>
<div style="position:absolute;left:39px;top:76px;width:380px;height:1191px;background:#fff"></div>
<div style="position:absolute;left:41px;top:77px;width:377px;height:25px;background:#f0f0f0"></div>
<div style="position:absolute;left:41px;top:102px;width:377px;height:1px;background:#a0a0a0"></div>
<div style="position:absolute;left:418px;top:76px;width:1px;height:1191px;background:#a0a0a0"></div>
<svg style="position:absolute;left:46px;top:81px" width="17" height="17" viewBox="0 0 17 17"><circle cx="8" cy="8" r="7.3" fill="url(#gball)" stroke="#50606a" stroke-width="1.2"/><text x="8" y="12.3" text-anchor="middle" font-family="Liberation Sans" font-weight="bold" font-size="11" fill="#fff">?</text></svg>
<div style="position:absolute;left:70.3px;top:81.24px;font-size:12px;color:#000;letter-spacing:-0.05px">Object properties</div>
<svg style="position:absolute;left:320px;top:82px" width="14" height="16" viewBox="0 0 14 16"><path d="M0.5 0.5H9.5L13.5 4.5V15.5H0.5Z" fill="#f8f8f8" stroke="#909090"/><rect x="2" y="3" width="3" height="3" fill="#60a8e8"/><rect x="2" y="6.5" width="3" height="3" fill="#f0d020"/><rect x="2" y="10" width="3" height="3" fill="#40b030"/><path d="M6.5 4.5H10M6.5 8H9M6.5 11.5H10" stroke="#303030" stroke-width="1"/></svg>
<svg style="position:absolute;left:343px;top:82px" width="16" height="15" viewBox="0 0 16 15"><path d="M1 1H9L7 3.5L15 11L11.5 14.5L4 7L1.5 9Z" fill="#4a98e0" stroke="#2a70b8" stroke-width="0.8"/></svg>
<svg style="position:absolute;left:367px;top:81px" width="17" height="17" viewBox="0 0 17 17"><circle cx="3.5" cy="3" r="2.3" fill="#fff" stroke="#404040" stroke-width="0.9"/><path d="M3.5 5.5V14M3.5 7.5H6" stroke="#404040" stroke-width="1.1"/><circle cx="8.5" cy="8" r="2.3" fill="#fff" stroke="#404040" stroke-width="0.9"/><path d="M7.5 11V12.5H9.5" stroke="#404040" stroke-width="1"/><circle cx="13" cy="13.5" r="2.3" fill="#fff" stroke="#404040" stroke-width="0.9"/></svg>
<svg style="position:absolute;left:392px;top:82px" width="14" height="14" viewBox="0 0 14 14"><path d="M2 2L12 12M12 2L2 12" stroke="#1a5aa0" stroke-width="4.2"/><path d="M2 2L12 12M12 2L2 12" stroke="#3a90e0" stroke-width="2.2"/></svg>
<div style="position:absolute;left:71px;top:121px;width:1px;height:11px;background:repeating-linear-gradient(#707070 0 1px,transparent 1px 2px)"></div>
<div style="position:absolute;left:72px;top:132px;width:1px;height:1px;background:#707070"></div>
<div style="position:absolute;left:74px;top:132px;width:1px;height:1px;background:#707070"></div>
<div style="position:absolute;left:76px;top:132px;width:1px;height:1px;background:#707070"></div>
<div style="position:absolute;left:78px;top:132px;width:1px;height:1px;background:#707070"></div>
<div style="position:absolute;left:80px;top:132px;width:1px;height:1px;background:#707070"></div>
<div style="position:absolute;left:82px;top:132px;width:1px;height:1px;background:#707070"></div>
<div style="position:absolute;left:60px;top:114px;width:1px;height:1px;background:#707070"></div>
<div style="position:absolute;left:62px;top:114px;width:1px;height:1px;background:#707070"></div>
<div style="position:absolute;left:90px;top:158px;width:1px;height:226px;background:repeating-linear-gradient(#707070 0 1px,transparent 1px 2px)"></div>
<div style="position:absolute;left:78px;top:150px;width:1px;height:1px;background:#707070"></div>
<div style="position:absolute;left:80px;top:150px;width:1px;height:1px;background:#707070"></div>
<div style="position:absolute;left:97px;top:168px;width:1px;height:1px;background:#707070"></div>
<div style="position:absolute;left:99px;top:168px;width:1px;height:1px;background:#707070"></div>
<div style="position:absolute;left:97px;top:186px;width:1px;height:1px;background:#707070"></div>
<div style="position:absolute;left:99px;top:186px;width:1px;height:1px;background:#707070"></div>
<div style="position:absolute;left:97px;top:348px;width:1px;height:1px;background:#707070"></div>
<div style="position:absolute;left:99px;top:348px;width:1px;height:1px;background:#707070"></div>
<div style="position:absolute;left:97px;top:366px;width:1px;height:1px;background:#707070"></div>
<div style="position:absolute;left:99px;top:366px;width:1px;height:1px;background:#707070"></div>
<div style="position:absolute;left:97px;top:384px;width:1px;height:1px;background:#707070"></div>
<div style="position:absolute;left:99px;top:384px;width:1px;height:1px;background:#707070"></div>
<div style="position:absolute;left:109px;top:212px;width:1px;height:118px;background:repeating-linear-gradient(#707070 0 1px,transparent 1px 2px)"></div>
<div style="position:absolute;left:110px;top:330px;width:1px;height:1px;background:#707070"></div>
<div style="position:absolute;left:112px;top:330px;width:1px;height:1px;background:#707070"></div>
<div style="position:absolute;left:114px;top:330px;width:1px;height:1px;background:#707070"></div>
<div style="position:absolute;left:116px;top:330px;width:1px;height:1px;background:#707070"></div>
<div style="position:absolute;left:118px;top:330px;width:1px;height:1px;background:#707070"></div>
<div style="position:absolute;left:120px;top:330px;width:1px;height:1px;background:#707070"></div>
<div style="position:absolute;left:115px;top:204px;width:1px;height:1px;background:#707070"></div>
<div style="position:absolute;left:117px;top:204px;width:1px;height:1px;background:#707070"></div>
<div style="position:absolute;left:128px;top:230px;width:1px;height:82px;background:repeating-linear-gradient(#707070 0 1px,transparent 1px 2px)"></div>
<div style="position:absolute;left:134px;top:222px;width:1px;height:1px;background:#707070"></div>
<div style="position:absolute;left:136px;top:222px;width:1px;height:1px;background:#707070"></div>
<div style="position:absolute;left:138px;top:222px;width:1px;height:1px;background:#707070"></div>
<div style="position:absolute;left:134px;top:312px;width:1px;height:1px;background:#707070"></div>
<div style="position:absolute;left:136px;top:312px;width:1px;height:1px;background:#707070"></div>
<div style="position:absolute;left:138px;top:312px;width:1px;height:1px;background:#707070"></div>
<div style="position:absolute;left:147px;top:230px;width:1px;height:10px;background:repeating-linear-gradient(#707070 0 1px,transparent 1px 2px)"></div>
<div style="position:absolute;left:148px;top:240px;width:1px;height:1px;background:#707070"></div>
<div style="position:absolute;left:150px;top:240px;width:1px;height:1px;background:#707070"></div>
<div style="position:absolute;left:152px;top:240px;width:1px;height:1px;background:#707070"></div>
<div style="position:absolute;left:154px;top:240px;width:1px;height:1px;background:#707070"></div>
<div style="position:absolute;left:156px;top:240px;width:1px;height:1px;background:#707070"></div>
<div style="position:absolute;left:147px;top:266px;width:1px;height:28px;background:repeating-linear-gradient(#707070 0 1px,transparent 1px 2px)"></div>
<div style="position:absolute;left:153px;top:258px;width:1px;height:1px;background:#707070"></div>
<div style="position:absolute;left:155px;top:258px;width:1px;height:1px;background:#707070"></div>
<div style="position:absolute;left:153px;top:276px;width:1px;height:1px;background:#707070"></div>
<div style="position:absolute;left:155px;top:276px;width:1px;height:1px;background:#707070"></div>
<div style="position:absolute;left:153px;top:294px;width:1px;height:1px;background:#707070"></div>
<div style="position:absolute;left:155px;top:294px;width:1px;height:1px;background:#707070"></div>
<div style="position:absolute;left:45px;top:108px;width:12px;height:12px;background:#fff"></div>
<svg style="position:absolute;left:46px;top:111px" width="10" height="6" viewBox="0 0 10 6"><path d="M0.8 0.8L5 5L9.2 0.8" fill="none" stroke="#202020" stroke-width="1.3"/></svg>
<svg style="position:absolute;left:64px;top:106px" width="14" height="13" viewBox="0 0 14 13"><rect x="0.5" y="0.5" width="13" height="12" fill="#eef4fa" stroke="#707070"/><rect x="1.5" y="1.5" width="4" height="2" fill="#a8cef0"/><rect x="1.5" y="3.5" width="9" height="2.2" fill="#f0e050" stroke="#b0a030" stroke-width="0.5"/><rect x="1.5" y="6.2" width="7" height="2.2" fill="#b0e890" stroke="#70a050" stroke-width="0.5"/><rect x="1.5" y="9" width="4" height="2.5" fill="#a8cef0"/></svg>
<div style="position:absolute;left:84px;top:103.84px;font-size:12px;color:#000;">Data sequence</div>
<svg style="position:absolute;left:83px;top:124px" width="15" height="15" viewBox="0 0 15 15"><path d="M7.5 0L11 3.5H4Z M7.5 15L11 11.5H4Z M0 7.5L3.5 4V11Z M15 7.5L11.5 4V11Z" fill="#3a78c0"/><rect x="3.5" y="3.5" width="8" height="8" fill="#fff" stroke="#3a78c0" stroke-width="0.8"/><circle cx="7.5" cy="7.5" r="1.8" fill="#8898a8"/></svg>
<div style="position:absolute;left:103.3px;top:121.84px;font-size:12px;color:#000;">Position</div>
<div style="position:absolute;left:65px;top:144px;width:12px;height:12px;background:#fff"></div>
<svg style="position:absolute;left:66px;top:147px" width="10" height="6" viewBox="0 0 10 6"><path d="M0.8 0.8L5 5L9.2 0.8" fill="none" stroke="#202020" stroke-width="1.3"/></svg>
<svg style="position:absolute;left:82px;top:141px" width="17" height="17" viewBox="0 0 17 17"><path d="M2 15.5L11 5" stroke="#8a6a40" stroke-width="3.4" stroke-linecap="round"/><path d="M2 15.5L11 5" stroke="#e0c090" stroke-width="1.8" stroke-linecap="round"/><path d="M7 3.5L10.5 0.5L16 5.5L13.5 7.5L11 5.5Z" fill="#303840"/></svg>
<div style="position:absolute;left:103.3px;top:139.84px;font-size:12px;color:#000;">Properties</div>
<div style="position:absolute;left:85px;top:163px;width:10px;height:12px;background:#fff"></div>
<svg style="position:absolute;left:87px;top:164px" width="7" height="10" viewBox="0 0 7 10"><path d="M0.8 0.8L5 5L0.8 9.2" fill="none" stroke="#8a8a8a" stroke-width="1.3"/></svg>
<svg style="position:absolute;left:102px;top:160px" width="13" height="16" viewBox="0 0 13 16"><path d="M6.5 0L12.5 6H8.5V10H12.5L6.5 16L0.5 10H4.5V6H0.5Z" fill="#4a90d8" stroke="#2a68a8" stroke-width="0.7"/></svg>
<div style="position:absolute;left:122.3px;top:157.84px;font-size:12px;color:#000;">Scale</div>
<div style="position:absolute;left:84px;top:180px;width:12px;height:12px;background:#fff"></div>
<svg style="position:absolute;left:85px;top:183px" width="10" height="6" viewBox="0 0 10 6"><path d="M0.8 0.8L5 5L9.2 0.8" fill="none" stroke="#202020" stroke-width="1.3"/></svg>
<svg style="position:absolute;left:101px;top:179px" width="17" height="17" viewBox="0 0 17 17"><rect x="0.5" y="0.5" width="3" height="12" fill="#a8cef0" stroke="#6080a0" stroke-width="0.7"/><rect x="1" y="3.5" width="7.5" height="2.6" fill="#f0e050" stroke="#b0a030" stroke-width="0.6"/><rect x="1" y="6.3" width="6" height="2.6" fill="#b0e890" stroke="#70a050" stroke-width="0.6"/><circle cx="8.5" cy="11.5" r="2.3" fill="#fff" stroke="#808080" stroke-width="0.9"/><path d="M11 0.5L14 3L11 6L14 9L12 11L15.5 13" fill="none" stroke="#30a020" stroke-width="1.1"/></svg>
<div style="position:absolute;left:122.3px;top:175.84px;font-size:12px;color:#000;">Series</div>
<div style="position:absolute;left:103px;top:198px;width:12px;height:12px;background:#fff"></div>
<svg style="position:absolute;left:104px;top:201px" width="10" height="6" viewBox="0 0 10 6"><path d="M0.8 0.8L5 5L9.2 0.8" fill="none" stroke="#202020" stroke-width="1.3"/></svg>
<div style="position:absolute;left:119.5px;top:196.18px;font-size:9px;color:#102a6a;font-weight:bold;letter-spacing:-0.6px">1,2.</div>
<div style="position:absolute;left:141px;top:193.84px;font-size:12px;color:#000;">Series definitions</div>
<div style="position:absolute;left:122px;top:216px;width:12px;height:12px;background:#fff"></div>
<svg style="position:absolute;left:123px;top:219px" width="10" height="6" viewBox="0 0 10 6"><path d="M0.8 0.8L5 5L9.2 0.8" fill="none" stroke="#202020" stroke-width="1.3"/></svg>
<svg style="position:absolute;left:141px;top:215px" width="11" height="14" viewBox="0 0 11 14"><rect x="0.5" y="0.5" width="3.5" height="13" fill="#a8cef0" stroke="#6080a0" stroke-width="0.8"/><rect x="1" y="3.5" width="9.5" height="2.6" fill="#f0e050" stroke="#b0a030" stroke-width="0.6"/><rect x="1" y="6.5" width="7.5" height="2.6" fill="#b0e890" stroke="#70a050" stroke-width="0.6"/></svg>
<div style="position:absolute;left:160.5px;top:211.84px;font-size:12px;color:#000;letter-spacing:-0.12px">-}&nbsp; <span style="letter-spacing:-0.6px">PSD</span>:<span style="letter-spacing:-0.6px">SAND</span> (Particle size Distribution [%])</div>
<svg style="position:absolute;left:158px;top:233px" width="16" height="13" viewBox="0 0 16 13"><rect x="0.5" y="0.5" width="15" height="12" fill="#2a6ac8" stroke="#1a4a98"/><rect x="1" y="1" width="14" height="5" fill="#5a9ae0"/><circle cx="8" cy="6.5" r="3.3" fill="#e8f0f8" stroke="#a8c0d8" stroke-width="0.6"/><path d="M6 5.5Q8 4.5 9.5 6Q8.5 8 7 8.5" fill="#5a9ae0"/></svg>
<div style="position:absolute;left:179.6px;top:229.84px;font-size:12px;color:#000;">Translations</div>
<div style="position:absolute;left:156px;top:248px;width:81px;height:18px;background:#d9d9d9;border:1px solid #a6a6a6;box-sizing:border-box"></div>
<div style="position:absolute;left:142px;top:252px;width:10px;height:12px;background:#fff"></div>
<svg style="position:absolute;left:144px;top:253px" width="7" height="10" viewBox="0 0 7 10"><path d="M0.8 0.8L5 5L0.8 9.2" fill="none" stroke="#8a8a8a" stroke-width="1.3"/></svg>
<svg style="position:absolute;left:161px;top:253px" width="9" height="9" viewBox="0 0 9 9"><circle cx="4.3" cy="4.3" r="3.8" fill="url(#gball)"/></svg>
<div style="position:absolute;left:179.6px;top:247.84px;font-size:12px;color:#000;">Parameter</div>
<div style="position:absolute;left:142px;top:270px;width:10px;height:12px;background:#fff"></div>
<svg style="position:absolute;left:144px;top:271px" width="7" height="10" viewBox="0 0 7 10"><path d="M0.8 0.8L5 5L0.8 9.2" fill="none" stroke="#8a8a8a" stroke-width="1.3"/></svg>
<svg style="position:absolute;left:158px;top:269px" width="16" height="14" viewBox="0 0 16 14"><circle cx="3.5" cy="3.5" r="2.5" fill="url(#gball2)"/><circle cx="3.5" cy="9.5" r="2.5" fill="url(#gball2)"/><path d="M8 3H12M8 8H12M8 11H12" stroke="#202020" stroke-width="1.1"/><path d="M6 13.5H15M15 6V13.5" stroke="#707070" stroke-width="0.8" stroke-dasharray="1 1"/></svg>
<div style="position:absolute;left:179.6px;top:265.84px;font-size:12px;color:#000;">Drawing type</div>
<div style="position:absolute;left:142px;top:288px;width:10px;height:12px;background:#fff"></div>
<svg style="position:absolute;left:144px;top:289px" width="7" height="10" viewBox="0 0 7 10"><path d="M0.8 0.8L5 5L0.8 9.2" fill="none" stroke="#8a8a8a" stroke-width="1.3"/></svg>
<svg style="position:absolute;left:156px;top:286px" width="16" height="18" viewBox="0 0 16 18"><path d="M4 1H15V4H14L13.5 2.5H11V12H12.5V13.5H7V12H8.5V2.5H6L5.5 4H4Z" fill="#404850"/><text x="0.5" y="17" font-family="Liberation Sans" font-size="9" fill="#303030">$</text></svg>
<div style="position:absolute;left:179.6px;top:283.84px;font-size:12px;color:#000;">Legend labeling</div>
<div style="position:absolute;left:123px;top:306px;width:10px;height:12px;background:#fff"></div>
<svg style="position:absolute;left:125px;top:307px" width="7" height="10" viewBox="0 0 7 10"><path d="M0.8 0.8L5 5L0.8 9.2" fill="none" stroke="#8a8a8a" stroke-width="1.3"/></svg>
<svg style="position:absolute;left:141px;top:305px" width="11" height="14" viewBox="0 0 11 14"><rect x="0.5" y="0.5" width="3.5" height="13" fill="#a8cef0" stroke="#6080a0" stroke-width="0.8"/><rect x="1" y="3.5" width="9.5" height="2.6" fill="#f0e050" stroke="#b0a030" stroke-width="0.6"/><rect x="1" y="6.5" width="7.5" height="2.6" fill="#b0e890" stroke="#70a050" stroke-width="0.6"/></svg>
<div style="position:absolute;left:160.5px;top:301.84px;font-size:12px;color:#000;letter-spacing:-0.1px">-}&nbsp; <span style="letter-spacing:-0.6px">PSD</span>:<span style="letter-spacing:-0.6px">CLAY</span> (<span style="letter-spacing:-0.6px">PSD</span>)</div>
<svg style="position:absolute;left:120px;top:320px" width="17" height="17" viewBox="0 0 17 17"><path d="M1 13L6 5L12 5L15 11L13 15Z" fill="#d8dee4" stroke="#707880" stroke-width="0.8"/><path d="M3 15L13 3L15.5 5.5L5.5 16.5L2 16.5Z" fill="#f0c030" stroke="#a07818" stroke-width="0.8"/><path d="M13 3L15.5 5.5" stroke="#e04040" stroke-width="1.8"/></svg>
<div style="position:absolute;left:141px;top:319.84px;font-size:12px;color:#000;">Presentation options</div>
<div style="position:absolute;left:85px;top:343px;width:10px;height:12px;background:#fff"></div>
<svg style="position:absolute;left:87px;top:344px" width="7" height="10" viewBox="0 0 7 10"><path d="M0.8 0.8L5 5L0.8 9.2" fill="none" stroke="#8a8a8a" stroke-width="1.3"/></svg>
<svg style="position:absolute;left:101px;top:344px" width="17" height="8" viewBox="0 0 17 8"><path d="M1 6.5H15.5M1.5 0.5V6.5M7.5 1V6.5M13.5 0.5V6.5M4.5 4.5V6.5M10.5 4.5V6.5" stroke="#28982a" stroke-width="1.5"/></svg>
<div style="position:absolute;left:122.3px;top:337.84px;font-size:12px;color:#000;">Parameter axis</div>
<div style="position:absolute;left:85px;top:361px;width:10px;height:12px;background:#fff"></div>
<svg style="position:absolute;left:87px;top:362px" width="7" height="10" viewBox="0 0 7 10"><path d="M0.8 0.8L5 5L0.8 9.2" fill="none" stroke="#8a8a8a" stroke-width="1.3"/></svg>
<svg style="position:absolute;left:104px;top:357px" width="10" height="16" viewBox="0 0 10 16"><path d="M6.5 1V15M2.5 1.5H6.5M4.5 4.5H6.5M2.5 8H6.5M4.5 11H6.5M2.5 14.5H6.5" stroke="#28982a" stroke-width="1.5"/></svg>
<div style="position:absolute;left:122.3px;top:355.84px;font-size:12px;color:#000;">Depth axis</div>
<div style="position:absolute;left:85px;top:379px;width:10px;height:12px;background:#fff"></div>
<svg style="position:absolute;left:87px;top:380px" width="7" height="10" viewBox="0 0 7 10"><path d="M0.8 0.8L5 5L0.8 9.2" fill="none" stroke="#8a8a8a" stroke-width="1.3"/></svg>
<svg style="position:absolute;left:102px;top:375px" width="14" height="16" viewBox="0 0 14 16"><path d="M2 1H6M7 1H11" stroke="#000" stroke-width="1.4"/><rect x="1.5" y="3.5" width="11" height="11" fill="#fff" stroke="#8a96a2"/><rect x="2.5" y="4.5" width="4.2" height="4.2" fill="#fff8a0"/><rect x="7.3" y="9.3" width="4.2" height="4.2" fill="#fcdc40"/><path d="M7 4V14M2 9H12" stroke="#8a96a2" stroke-width="0.8"/></svg>
<div style="position:absolute;left:122.3px;top:373.84px;font-size:12px;color:#000;">Presentation options</div>
<div style="position:absolute;left:41px;top:723px;width:377px;height:1px;background:#a0a0a0"></div>
<div style="position:absolute;left:41px;top:724px;width:377px;height:543px;background:#fff"></div>
<div style="position:absolute;left:42px;top:727px;width:375px;height:539px;background:#f0f0f0;border:1px solid #a0a0a0;border-radius:8px;box-sizing:border-box"></div>
<div style="position:absolute;left:52.4px;top:732.04px;font-size:12px;color:#000;">Parameter</div>
<div style="position:absolute;left:43px;top:751px;width:373px;height:1px;background:#a0a0a0"></div>
<div style="position:absolute;left:53px;top:763px;width:355px;height:240px;border:1px solid #dcdcdc;box-sizing:border-box"></div>
<div style="position:absolute;left:59.2px;top:757.34px;font-size:12px;line-height:15px;padding:0 2px;background:#f0f0f0;">Parameter</div>
<svg style="position:absolute;left:61px;top:783px" width="12" height="12" viewBox="0 0 12 12"><circle cx="5.5" cy="5.5" r="5" fill="url(#gball)"/></svg>
<div style="position:absolute;left:76px;top:780px;width:321px;height:22px;background:#fff;border:1px solid #f9f9f9;border-bottom:1px solid #8a8a8a;border-radius:2px 2px 0 0;box-sizing:border-box"></div>
<div style="position:absolute;left:380px;top:782px;width:15px;height:17px;background:#fbfbfb;border:1px solid #cfcfcf;border-radius:3px;box-sizing:border-box"></div>
<div style="position:absolute;left:384px;top:793px;width:2px;height:2px;background:#1a3a68"></div>
<div style="position:absolute;left:387px;top:793px;width:2px;height:2px;background:#1a3a68"></div>
<div style="position:absolute;left:390px;top:793px;width:2px;height:2px;background:#1a3a68"></div>
<div style="position:absolute;left:78.4px;top:781.54px;font-size:12px;color:#000;">-}&nbsp; <span style="letter-spacing:-0.6px">PSD</span>:<span style="letter-spacing:-0.6px">SAND</span></div>
<div style="position:absolute;left:58.4px;top:802.74px;font-size:12px;color:#000;">Optional formular:</div>
<div style="position:absolute;left:58.4px;top:817.34px;font-size:12px;color:#000;">Sample: $<span style="letter-spacing:-0.6px">PARAM</span>$ * 1.5</div>
<div style="position:absolute;left:58px;top:836px;width:339px;height:22px;background:#fff;border:1px solid #f9f9f9;border-bottom:1px solid #8a8a8a;border-radius:2px 2px 0 0;box-sizing:border-box"></div>
<div style="position:absolute;left:380px;top:838px;width:15px;height:17px;background:#fbfbfb;border:1px solid #cfcfcf;border-radius:3px;box-sizing:border-box"></div>
<div style="position:absolute;left:384px;top:849px;width:2px;height:2px;background:#1a3a68"></div>
<div style="position:absolute;left:387px;top:849px;width:2px;height:2px;background:#1a3a68"></div>
<div style="position:absolute;left:390px;top:849px;width:2px;height:2px;background:#1a3a68"></div>
<div style="position:absolute;left:58.4px;top:860.74px;font-size:12px;color:#000;">Object frame query:</div>
<div style="position:absolute;left:58px;top:882px;width:339px;height:22px;background:#fff;border:1px solid #f9f9f9;border-bottom:1px solid #8a8a8a;border-radius:2px 2px 0 0;box-sizing:border-box"></div>
<div style="position:absolute;left:380px;top:884px;width:15px;height:17px;background:#fbfbfb;border:1px solid #cfcfcf;border-radius:3px;box-sizing:border-box"></div>
<div style="position:absolute;left:384px;top:895px;width:2px;height:2px;background:#1a3a68"></div>
<div style="position:absolute;left:387px;top:895px;width:2px;height:2px;background:#1a3a68"></div>
<div style="position:absolute;left:390px;top:895px;width:2px;height:2px;background:#1a3a68"></div>
<div style="position:absolute;left:60.5px;top:882.84px;font-size:12px;color:#000;">none</div>
<div style="position:absolute;left:58.4px;top:906.84px;font-size:12px;color:#000;">Depth column: Start depth</div>
<div style="position:absolute;left:58px;top:928px;width:339px;height:22px;background:#fff;border:1px solid #f9f9f9;border-bottom:1px solid #8a8a8a;border-radius:2px 2px 0 0;box-sizing:border-box"></div>
<div style="position:absolute;left:380px;top:930px;width:15px;height:17px;background:#fbfbfb;border:1px solid #cfcfcf;border-radius:3px;box-sizing:border-box"></div>
<div style="position:absolute;left:384px;top:941px;width:2px;height:2px;background:#1a3a68"></div>
<div style="position:absolute;left:387px;top:941px;width:2px;height:2px;background:#1a3a68"></div>
<div style="position:absolute;left:390px;top:941px;width:2px;height:2px;background:#1a3a68"></div>
<div style="position:absolute;left:60.5px;top:929.34px;font-size:12px;color:#000;"><span style="letter-spacing:-0.6px">INVZBEG</span></div>
<div style="position:absolute;left:58.4px;top:953.94px;font-size:12px;color:#000;">Depth column: End depth</div>
<div style="position:absolute;left:58px;top:974px;width:339px;height:22px;background:#fff;border:1px solid #f9f9f9;border-bottom:1px solid #8a8a8a;border-radius:2px 2px 0 0;box-sizing:border-box"></div>
<div style="position:absolute;left:380px;top:976px;width:15px;height:17px;background:#fbfbfb;border:1px solid #cfcfcf;border-radius:3px;box-sizing:border-box"></div>
<div style="position:absolute;left:384px;top:987px;width:2px;height:2px;background:#1a3a68"></div>
<div style="position:absolute;left:387px;top:987px;width:2px;height:2px;background:#1a3a68"></div>
<div style="position:absolute;left:390px;top:987px;width:2px;height:2px;background:#1a3a68"></div>
<div style="position:absolute;left:60.5px;top:975.34px;font-size:12px;color:#000;"><span style="letter-spacing:-0.6px">INVZEND</span></div>
<div style="position:absolute;left:53px;top:1017px;width:355px;height:51px;border:1px solid #dcdcdc;box-sizing:border-box"></div>
<div style="position:absolute;left:59px;top:1010.54px;font-size:12px;line-height:15px;padding:0 2px;background:#f0f0f0;">Data point of a sample interval:</div>
<div style="position:absolute;left:59px;top:1035px;width:197px;height:23px;background:#fdfdfd;border:1px solid #d0d0d0;border-radius:2px;box-sizing:border-box"></div>
<div style="position:absolute;left:63.4px;top:1038.34px;font-size:12px;color:#000;">Bottom reference</div>
<svg style="position:absolute;left:241px;top:1043px" width="10" height="6" viewBox="0 0 10 6"><path d="M0.8 0.8L5 5L9.2 0.8" fill="none" stroke="#404040" stroke-width="1"/></svg>
<div style="position:absolute;left:53px;top:1082px;width:355px;height:103px;border:1px solid #dcdcdc;box-sizing:border-box"></div>
<div style="position:absolute;left:59px;top:1075.64px;font-size:12px;line-height:15px;padding:0 2px;background:#f0f0f0;">Sediment sample choice</div>
<div style="position:absolute;left:59px;top:1100.14px;font-size:12px;color:#000;">Sample types:</div>
<div style="position:absolute;left:137px;top:1099px;width:262px;height:22px;background:#fff;border:1px solid #f9f9f9;border-radius:2px 2px 0 0;border-bottom:1px solid #8a8a8a;box-sizing:border-box"></div>
<div style="position:absolute;left:59px;top:1130.14px;font-size:12px;color:#000;">In field:</div>
<div style="position:absolute;left:137px;top:1125px;width:263px;height:23px;background:#fff;border:1px solid #7a7a7a;border-radius:2px;box-sizing:border-box"></div>
<div style="position:absolute;left:140.2px;top:1127.34px;font-size:12px;color:#000;">Method</div>
<svg style="position:absolute;left:387px;top:1134px" width="10" height="6" viewBox="0 0 10 6"><path d="M0.8 0.8L5 5L9.2 0.8" fill="none" stroke="#404040" stroke-width="1"/></svg>
<svg style="position:absolute;left:59px;top:1161px" width="14" height="14" viewBox="0 0 14 14"><circle cx="6.5" cy="6.5" r="6.3" fill="#0062c4"/><circle cx="6.5" cy="6.5" r="2.6" fill="#fff"/></svg>
<div style="position:absolute;left:75px;top:1159.14px;font-size:12px;color:#000;">include</div>
<svg style="position:absolute;left:166px;top:1161px" width="14" height="14" viewBox="0 0 14 14"><circle cx="6.5" cy="6.5" r="5.9" fill="#f8f8f8" stroke="#333" stroke-width="0.9"/></svg>
<div style="position:absolute;left:182.6px;top:1159.14px;font-size:12px;color:#000;">exclude</div>
<div style="position:absolute;left:53px;top:1200px;width:355px;height:43px;border:1px solid #dcdcdc;box-sizing:border-box"></div>
<div style="position:absolute;left:59.2px;top:1192.24px;font-size:12px;line-height:15px;padding:0 2px;background:#f0f0f0;">Multi object frame</div>
<div style="position:absolute;left:60.6px;top:1212.74px;font-size:12px;color:#a0a0a0;">Object number (0 for all):</div>
<div style="position:absolute;left:351px;top:1211px;width:46px;height:22px;background:#fafafa;border:1px solid #ececec;box-sizing:border-box"></div>
<div style="position:absolute;left:353.5px;top:1213.34px;font-size:12px;color:#6a6a6a;">1</div>
<div style="position:absolute;left:380px;top:1213px;width:15px;height:18px;background:#e8e8e8;border:1px solid #e0e0e0;box-sizing:border-box"></div>
<svg style="position:absolute;left:382px;top:1214px" width="11" height="16" viewBox="0 0 11 16"><path d="M2 6L5.5 2.5L9 6M2 10L5.5 13.5L9 10" fill="none" stroke="#c0c0c0" stroke-width="1"/></svg>
<div style="position:absolute;left:419px;top:76px;width:946px;height:1191px;background:#f0f0f0"></div>
<div style="position:absolute;left:422px;top:76px;width:943px;height:1191px;background:#fff;border-left:1px solid #d8d8d8;box-sizing:border-box"></div>
<div style="position:absolute;left:426px;top:1248px;width:939px;height:16px;background:#f0f0f0"></div>
<div style="position:absolute;left:468px;top:1255px;width:897px;height:2px;background:#7a7a7a"></div>
<div style="position:absolute;left:422px;top:1266px;width:943px;height:1px;background:#d8d8d8"></div>
<div style="position:absolute;left:554px;top:900px;width:1px;height:347px;background:#000"></div>
<div style="position:absolute;left:1358px;top:900px;width:2px;height:347px;background:#000"></div>
<div style="position:absolute;left:989px;top:1212px;width:7px;height:7px;background:#c0c0c0"></div>
<div style="position:absolute;left:1348px;top:1212px;width:7px;height:7px;background:#c0c0c0"></div>
<div style="position:absolute;left:563px;top:1243px;width:1px;height:4px;background:#a0a0a0"></div>
<div style="position:absolute;left:1352px;top:1243px;width:1px;height:4px;background:#a0a0a0"></div>
<div style="position:absolute;left:422px;top:73px;width:941px;height:886px;background:#f0f0f0;border:1px solid #9a9a9a;border-radius:8px;box-sizing:border-box;box-shadow:0 14px 44px -2px rgba(0,0,0,0.30),0 44px 64px -24px rgba(0,0,0,0.16)"></div>
<div style="position:absolute;left:423px;top:74px;width:939px;height:30px;background:#f3f3f3;border-radius:7px 7px 0 0"></div>
<svg style="position:absolute;left:430px;top:80px" width="18" height="17" viewBox="0 0 18 17"><path d="M1 9Q4 7 8 7L12 2L13.5 1L14 7L17 9.5L10 12L5 14L1 12Z" fill="#a4c850"/><path d="M1 12L1 14L5 16L17 12V9.5L10 12L5 14Z" fill="#c8c8c8"/><path d="M1 13.5L5 15.5L17 11.5" stroke="#a0a0a0" stroke-width="0.8" fill="none"/><path d="M8 13.5L8.5 9.5L11 9L12 6.5L13 2" stroke="#4aa0c0" stroke-width="1.2" fill="none"/></svg>
<div style="position:absolute;left:452.4px;top:80.34px;font-size:12px;color:#000;">Depth column</div>
<svg style="position:absolute;left:1341px;top:82px" width="12" height="12" viewBox="0 0 12 12"><path d="M1 1L11 11M11 1L1 11" stroke="#111" stroke-width="1.1"/></svg>
<div style="position:absolute;left:432.6px;top:105.74px;font-size:12px;color:#000;">Available data fields:</div>
<div style="position:absolute;left:432.6px;top:126.54px;font-size:12px;color:#000;letter-spacing:-0.03px">This list contains no values, when the current graphic element is not linked to an object.</div>
<div style="position:absolute;left:433px;top:172px;width:920px;height:734px;background:#fff;border:1px solid #828790;box-sizing:border-box"></div>
<div style="position:absolute;left:437.3px;top:175.04px;font-size:12px;color:#000;">Parameter</div>
<svg style="position:absolute;left:919px;top:178px" width="9" height="9" viewBox="0 0 9 9"><path d="M4.5 1L8 8H1Z" fill="none" stroke="#9a9a9a" stroke-width="1"/></svg>
<div style="position:absolute;left:933px;top:173px;width:1px;height:21px;background:#e5e5e5"></div>
<div style="position:absolute;left:1133px;top:173px;width:1px;height:21px;background:#e5e5e5"></div>
<div style="position:absolute;left:937.4px;top:175.04px;font-size:12px;color:#000;">Macro name</div>
<div style="position:absolute;left:1137.4px;top:175.04px;font-size:12px;color:#000;">Measurement unit</div>
<div style="position:absolute;left:1335px;top:173px;width:17px;height:732px;background:#f0f0f0"></div>
<div style="position:absolute;left:1343px;top:190px;width:2px;height:586px;background:#858585"></div>
<div style="position:absolute;left:433px;top:194px;width:902px;height:711px;overflow:hidden"><div style="position:absolute;left:41.60000000000002px;top:0.84px;font-size:12px;color:#000;">locations (geot. borehole)</div>
<div style="position:absolute;left:504.4px;top:0.84px;font-size:12px;color:#000;">G1L</div>
<div style="position:absolute;left:39px;top:19px;width:862px;height:19px;background:#0078d7"></div>
<div style="position:absolute;left:41.60000000000002px;top:19.84px;font-size:12px;color:#fff;">Samples</div>
<div style="position:absolute;left:504.4px;top:19.84px;font-size:12px;color:#fff;">G1<span style="letter-spacing:-0.6px">SAMPLE</span></div>
<div style="position:absolute;left:60.60000000000002px;top:38.84px;font-size:12px;color:#000;">Alpha cone</div>
<div style="position:absolute;left:503.4px;top:38.84px;font-size:12px;color:#000;"><span style="letter-spacing:0.5px">-&gt; </span><span style="letter-spacing:-0.6px">ACONE</span></div>
<div style="position:absolute;left:703.2px;top:38.84px;font-size:12px;color:#000;">1</div>
<div style="position:absolute;left:29px;top:48px;width:1px;height:1px;background:#b8b8b8"></div>
<div style="position:absolute;left:31px;top:48px;width:1px;height:1px;background:#b8b8b8"></div>
<div style="position:absolute;left:33px;top:48px;width:1px;height:1px;background:#b8b8b8"></div>
<div style="position:absolute;left:35px;top:48px;width:1px;height:1px;background:#b8b8b8"></div>
<div style="position:absolute;left:37px;top:48px;width:1px;height:1px;background:#b8b8b8"></div>
<svg style="position:absolute;left:44px;top:44px" width="8" height="8" viewBox="0 0 8 8"><circle cx="3.7" cy="3.7" r="3.4" fill="url(#gball)"/></svg>
<div style="position:absolute;left:60.60000000000002px;top:57.84px;font-size:12px;color:#000;">Alpha sleeve</div>
<div style="position:absolute;left:503.4px;top:57.84px;font-size:12px;color:#000;"><span style="letter-spacing:0.5px">-&gt; </span><span style="letter-spacing:-0.6px">ASLEEVE</span></div>
<div style="position:absolute;left:703.2px;top:57.84px;font-size:12px;color:#000;">1</div>
<div style="position:absolute;left:29px;top:67px;width:1px;height:1px;background:#b8b8b8"></div>
<div style="position:absolute;left:31px;top:67px;width:1px;height:1px;background:#b8b8b8"></div>
<div style="position:absolute;left:33px;top:67px;width:1px;height:1px;background:#b8b8b8"></div>
<div style="position:absolute;left:35px;top:67px;width:1px;height:1px;background:#b8b8b8"></div>
<div style="position:absolute;left:37px;top:67px;width:1px;height:1px;background:#b8b8b8"></div>
<svg style="position:absolute;left:44px;top:63px" width="8" height="8" viewBox="0 0 8 8"><circle cx="3.7" cy="3.7" r="3.4" fill="url(#gball)"/></svg>
<div style="position:absolute;left:60.60000000000002px;top:76.84px;font-size:12px;color:#000;">Barometric pressure</div>
<div style="position:absolute;left:503.4px;top:76.84px;font-size:12px;color:#000;"><span style="letter-spacing:0.5px">-&gt; </span><span style="letter-spacing:-0.6px">SAMPBAR</span></div>
<div style="position:absolute;left:703.2px;top:76.84px;font-size:12px;color:#000;">kPa</div>
<div style="position:absolute;left:29px;top:86px;width:1px;height:1px;background:#b8b8b8"></div>
<div style="position:absolute;left:31px;top:86px;width:1px;height:1px;background:#b8b8b8"></div>
<div style="position:absolute;left:33px;top:86px;width:1px;height:1px;background:#b8b8b8"></div>
<div style="position:absolute;left:35px;top:86px;width:1px;height:1px;background:#b8b8b8"></div>
<div style="position:absolute;left:37px;top:86px;width:1px;height:1px;background:#b8b8b8"></div>
<svg style="position:absolute;left:44px;top:82px" width="8" height="8" viewBox="0 0 8 8"><circle cx="3.7" cy="3.7" r="3.4" fill="url(#gball)"/></svg>
<div style="position:absolute;left:60.60000000000002px;top:95.84px;font-size:12px;color:#000;">Blow count</div>
<div style="position:absolute;left:503.4px;top:95.84px;font-size:12px;color:#000;"><span style="letter-spacing:0.5px">-&gt; </span><span style="letter-spacing:-0.6px">BLOWCOUNT</span></div>
<div style="position:absolute;left:29px;top:105px;width:1px;height:1px;background:#b8b8b8"></div>
<div style="position:absolute;left:31px;top:105px;width:1px;height:1px;background:#b8b8b8"></div>
<div style="position:absolute;left:33px;top:105px;width:1px;height:1px;background:#b8b8b8"></div>
<div style="position:absolute;left:35px;top:105px;width:1px;height:1px;background:#b8b8b8"></div>
<div style="position:absolute;left:37px;top:105px;width:1px;height:1px;background:#b8b8b8"></div>
<svg style="position:absolute;left:44px;top:101px" width="8" height="8" viewBox="0 0 8 8"><circle cx="3.7" cy="3.7" r="3.4" fill="url(#gball)"/></svg>
<div style="position:absolute;left:60.60000000000002px;top:114.84px;font-size:12px;color:#000;">Comments</div>
<div style="position:absolute;left:503.4px;top:114.84px;font-size:12px;color:#000;"><span style="letter-spacing:0.5px">-&gt; </span><span style="letter-spacing:-0.6px">COMMENTS</span></div>
<div style="position:absolute;left:29px;top:124px;width:1px;height:1px;background:#b8b8b8"></div>
<div style="position:absolute;left:31px;top:124px;width:1px;height:1px;background:#b8b8b8"></div>
<div style="position:absolute;left:33px;top:124px;width:1px;height:1px;background:#b8b8b8"></div>
<div style="position:absolute;left:35px;top:124px;width:1px;height:1px;background:#b8b8b8"></div>
<div style="position:absolute;left:37px;top:124px;width:1px;height:1px;background:#b8b8b8"></div>
<svg style="position:absolute;left:44px;top:120px" width="8" height="8" viewBox="0 0 8 8"><circle cx="3.7" cy="3.7" r="3.4" fill="url(#gball)"/></svg>
<div style="position:absolute;left:60.60000000000002px;top:133.84px;font-size:12px;color:#000;">Cone number</div>
<div style="position:absolute;left:503.4px;top:133.84px;font-size:12px;color:#000;"><span style="letter-spacing:0.5px">-&gt; </span><span style="letter-spacing:-0.6px">CONENMB</span></div>
<div style="position:absolute;left:29px;top:143px;width:1px;height:1px;background:#b8b8b8"></div>
<div style="position:absolute;left:31px;top:143px;width:1px;height:1px;background:#b8b8b8"></div>
<div style="position:absolute;left:33px;top:143px;width:1px;height:1px;background:#b8b8b8"></div>
<div style="position:absolute;left:35px;top:143px;width:1px;height:1px;background:#b8b8b8"></div>
<div style="position:absolute;left:37px;top:143px;width:1px;height:1px;background:#b8b8b8"></div>
<svg style="position:absolute;left:44px;top:139px" width="8" height="8" viewBox="0 0 8 8"><circle cx="3.7" cy="3.7" r="3.4" fill="url(#gball)"/></svg>
<div style="position:absolute;left:60.60000000000002px;top:152.84px;font-size:12px;color:#000;">Date</div>
<div style="position:absolute;left:503.4px;top:152.84px;font-size:12px;color:#000;"><span style="letter-spacing:0.5px">-&gt; </span><span style="letter-spacing:-0.6px">SMPDATE</span></div>
<div style="position:absolute;left:29px;top:162px;width:1px;height:1px;background:#b8b8b8"></div>
<div style="position:absolute;left:31px;top:162px;width:1px;height:1px;background:#b8b8b8"></div>
<div style="position:absolute;left:33px;top:162px;width:1px;height:1px;background:#b8b8b8"></div>
<div style="position:absolute;left:35px;top:162px;width:1px;height:1px;background:#b8b8b8"></div>
<div style="position:absolute;left:37px;top:162px;width:1px;height:1px;background:#b8b8b8"></div>
<svg style="position:absolute;left:44px;top:158px" width="8" height="8" viewBox="0 0 8 8"><circle cx="3.7" cy="3.7" r="3.4" fill="url(#gball)"/></svg>
<div style="position:absolute;left:60.60000000000002px;top:171.84px;font-size:12px;color:#000;">Date of sample description</div>
<div style="position:absolute;left:503.4px;top:171.84px;font-size:12px;color:#000;"><span style="letter-spacing:0.5px">-&gt; </span><span style="letter-spacing:-0.6px">SMPDESCD</span></div>
<div style="position:absolute;left:29px;top:181px;width:1px;height:1px;background:#b8b8b8"></div>
<div style="position:absolute;left:31px;top:181px;width:1px;height:1px;background:#b8b8b8"></div>
<div style="position:absolute;left:33px;top:181px;width:1px;height:1px;background:#b8b8b8"></div>
<div style="position:absolute;left:35px;top:181px;width:1px;height:1px;background:#b8b8b8"></div>
<div style="position:absolute;left:37px;top:181px;width:1px;height:1px;background:#b8b8b8"></div>
<svg style="position:absolute;left:44px;top:177px" width="8" height="8" viewBox="0 0 8 8"><circle cx="3.7" cy="3.7" r="3.4" fill="url(#gball)"/></svg>
<div style="position:absolute;left:60.60000000000002px;top:190.84px;font-size:12px;color:#000;">Depth to water below ground surface</div>
<div style="position:absolute;left:503.4px;top:190.84px;font-size:12px;color:#000;"><span style="letter-spacing:0.5px">-&gt; </span><span style="letter-spacing:-0.6px">DEPTHWAT</span></div>
<div style="position:absolute;left:703.2px;top:190.84px;font-size:12px;color:#000;">m</div>
<div style="position:absolute;left:29px;top:200px;width:1px;height:1px;background:#b8b8b8"></div>
<div style="position:absolute;left:31px;top:200px;width:1px;height:1px;background:#b8b8b8"></div>
<div style="position:absolute;left:33px;top:200px;width:1px;height:1px;background:#b8b8b8"></div>
<div style="position:absolute;left:35px;top:200px;width:1px;height:1px;background:#b8b8b8"></div>
<div style="position:absolute;left:37px;top:200px;width:1px;height:1px;background:#b8b8b8"></div>
<svg style="position:absolute;left:44px;top:196px" width="8" height="8" viewBox="0 0 8 8"><circle cx="3.7" cy="3.7" r="3.4" fill="url(#gball)"/></svg>
<div style="position:absolute;left:60.60000000000002px;top:209.84px;font-size:12px;color:#000;">Diameter</div>
<div style="position:absolute;left:503.4px;top:209.84px;font-size:12px;color:#000;"><span style="letter-spacing:0.5px">-&gt; </span><span style="letter-spacing:-0.6px">SAMPDIAM</span></div>
<div style="position:absolute;left:703.2px;top:209.84px;font-size:12px;color:#000;">mm</div>
<div style="position:absolute;left:29px;top:219px;width:1px;height:1px;background:#b8b8b8"></div>
<div style="position:absolute;left:31px;top:219px;width:1px;height:1px;background:#b8b8b8"></div>
<div style="position:absolute;left:33px;top:219px;width:1px;height:1px;background:#b8b8b8"></div>
<div style="position:absolute;left:35px;top:219px;width:1px;height:1px;background:#b8b8b8"></div>
<div style="position:absolute;left:37px;top:219px;width:1px;height:1px;background:#b8b8b8"></div>
<svg style="position:absolute;left:44px;top:215px" width="8" height="8" viewBox="0 0 8 8"><circle cx="3.7" cy="3.7" r="3.4" fill="url(#gball)"/></svg>
<div style="position:absolute;left:60.60000000000002px;top:228.84px;font-size:12px;color:#000;">Gas flow</div>
<div style="position:absolute;left:503.4px;top:228.84px;font-size:12px;color:#000;"><span style="letter-spacing:0.5px">-&gt; </span><span style="letter-spacing:-0.6px">GASFLOW</span></div>
<div style="position:absolute;left:703.2px;top:228.84px;font-size:12px;color:#000;">l/min</div>
<div style="position:absolute;left:29px;top:238px;width:1px;height:1px;background:#b8b8b8"></div>
<div style="position:absolute;left:31px;top:238px;width:1px;height:1px;background:#b8b8b8"></div>
<div style="position:absolute;left:33px;top:238px;width:1px;height:1px;background:#b8b8b8"></div>
<div style="position:absolute;left:35px;top:238px;width:1px;height:1px;background:#b8b8b8"></div>
<div style="position:absolute;left:37px;top:238px;width:1px;height:1px;background:#b8b8b8"></div>
<svg style="position:absolute;left:44px;top:234px" width="8" height="8" viewBox="0 0 8 8"><circle cx="3.7" cy="3.7" r="3.4" fill="url(#gball)"/></svg>
<div style="position:absolute;left:60.60000000000002px;top:247.84px;font-size:12px;color:#000;">Gas pressure</div>
<div style="position:absolute;left:503.4px;top:247.84px;font-size:12px;color:#000;"><span style="letter-spacing:0.5px">-&gt; </span><span style="letter-spacing:-0.6px">GASPRES</span></div>
<div style="position:absolute;left:703.2px;top:247.84px;font-size:12px;color:#000;">kPa</div>
<div style="position:absolute;left:29px;top:257px;width:1px;height:1px;background:#b8b8b8"></div>
<div style="position:absolute;left:31px;top:257px;width:1px;height:1px;background:#b8b8b8"></div>
<div style="position:absolute;left:33px;top:257px;width:1px;height:1px;background:#b8b8b8"></div>
<div style="position:absolute;left:35px;top:257px;width:1px;height:1px;background:#b8b8b8"></div>
<div style="position:absolute;left:37px;top:257px;width:1px;height:1px;background:#b8b8b8"></div>
<svg style="position:absolute;left:44px;top:253px" width="8" height="8" viewBox="0 0 8 8"><circle cx="3.7" cy="3.7" r="3.4" fill="url(#gball)"/></svg>
<div style="position:absolute;left:60.60000000000002px;top:266.84px;font-size:12px;color:#000;">GeODin Inv <span style="letter-spacing:-0.6px">ID</span></div>
<div style="position:absolute;left:503.4px;top:266.84px;font-size:12px;color:#000;"><span style="letter-spacing:0.5px">-&gt; </span><span style="letter-spacing:-0.6px">INVID</span></div>
<div style="position:absolute;left:29px;top:276px;width:1px;height:1px;background:#b8b8b8"></div>
<div style="position:absolute;left:31px;top:276px;width:1px;height:1px;background:#b8b8b8"></div>
<div style="position:absolute;left:33px;top:276px;width:1px;height:1px;background:#b8b8b8"></div>
<div style="position:absolute;left:35px;top:276px;width:1px;height:1px;background:#b8b8b8"></div>
<div style="position:absolute;left:37px;top:276px;width:1px;height:1px;background:#b8b8b8"></div>
<svg style="position:absolute;left:44px;top:272px" width="8" height="8" viewBox="0 0 8 8"><circle cx="3.7" cy="3.7" r="3.4" fill="url(#gball)"/></svg>
<div style="position:absolute;left:60.60000000000002px;top:285.84px;font-size:12px;color:#000;">GeODinG<span style="letter-spacing:-0.6px">UID</span></div>
<div style="position:absolute;left:503.4px;top:285.84px;font-size:12px;color:#000;"><span style="letter-spacing:0.5px">-&gt; </span><span style="letter-spacing:-0.6px">GEODINGUID</span></div>
<div style="position:absolute;left:29px;top:295px;width:1px;height:1px;background:#b8b8b8"></div>
<div style="position:absolute;left:31px;top:295px;width:1px;height:1px;background:#b8b8b8"></div>
<div style="position:absolute;left:33px;top:295px;width:1px;height:1px;background:#b8b8b8"></div>
<div style="position:absolute;left:35px;top:295px;width:1px;height:1px;background:#b8b8b8"></div>
<div style="position:absolute;left:37px;top:295px;width:1px;height:1px;background:#b8b8b8"></div>
<svg style="position:absolute;left:44px;top:291px" width="8" height="8" viewBox="0 0 8 8"><circle cx="3.7" cy="3.7" r="3.4" fill="url(#gball)"/></svg>
<div style="position:absolute;left:60.60000000000002px;top:304.84px;font-size:12px;color:#000;">Ground description</div>
<div style="position:absolute;left:503.4px;top:304.84px;font-size:12px;color:#000;"><span style="letter-spacing:0.5px">-&gt; </span>%<span style="letter-spacing:-0.6px">SMPDESC</span></div>
<div style="position:absolute;left:29px;top:314px;width:1px;height:1px;background:#b8b8b8"></div>
<div style="position:absolute;left:31px;top:314px;width:1px;height:1px;background:#b8b8b8"></div>
<div style="position:absolute;left:33px;top:314px;width:1px;height:1px;background:#b8b8b8"></div>
<div style="position:absolute;left:35px;top:314px;width:1px;height:1px;background:#b8b8b8"></div>
<div style="position:absolute;left:37px;top:314px;width:1px;height:1px;background:#b8b8b8"></div>
<svg style="position:absolute;left:44px;top:310px" width="8" height="8" viewBox="0 0 8 8"><circle cx="3.7" cy="3.7" r="3.4" fill="url(#gball)"/></svg>
<div style="position:absolute;left:60.60000000000002px;top:323.84px;font-size:12px;color:#000;">Logged by</div>
<div style="position:absolute;left:503.4px;top:323.84px;font-size:12px;color:#000;"><span style="letter-spacing:0.5px">-&gt; </span><span style="letter-spacing:-0.6px">LOGGER</span></div>
<div style="position:absolute;left:29px;top:333px;width:1px;height:1px;background:#b8b8b8"></div>
<div style="position:absolute;left:31px;top:333px;width:1px;height:1px;background:#b8b8b8"></div>
<div style="position:absolute;left:33px;top:333px;width:1px;height:1px;background:#b8b8b8"></div>
<div style="position:absolute;left:35px;top:333px;width:1px;height:1px;background:#b8b8b8"></div>
<div style="position:absolute;left:37px;top:333px;width:1px;height:1px;background:#b8b8b8"></div>
<svg style="position:absolute;left:44px;top:329px" width="8" height="8" viewBox="0 0 8 8"><circle cx="3.7" cy="3.7" r="3.4" fill="url(#gball)"/></svg>
<div style="position:absolute;left:60.60000000000002px;top:342.84px;font-size:12px;color:#000;">Method</div>
<div style="position:absolute;left:503.4px;top:342.84px;font-size:12px;color:#000;"><span style="letter-spacing:0.5px">-&gt; </span><span style="letter-spacing:-0.6px">TESTTYPE</span></div>
<div style="position:absolute;left:29px;top:352px;width:1px;height:1px;background:#b8b8b8"></div>
<div style="position:absolute;left:31px;top:352px;width:1px;height:1px;background:#b8b8b8"></div>
<div style="position:absolute;left:33px;top:352px;width:1px;height:1px;background:#b8b8b8"></div>
<div style="position:absolute;left:35px;top:352px;width:1px;height:1px;background:#b8b8b8"></div>
<div style="position:absolute;left:37px;top:352px;width:1px;height:1px;background:#b8b8b8"></div>
<svg style="position:absolute;left:44px;top:348px" width="8" height="8" viewBox="0 0 8 8"><circle cx="3.7" cy="3.7" r="3.4" fill="url(#gball)"/></svg>
<div style="position:absolute;left:60.60000000000002px;top:361.84px;font-size:12px;color:#000;">Parent <span style="letter-spacing:-0.6px">ID</span></div>
<div style="position:absolute;left:503.4px;top:361.84px;font-size:12px;color:#000;"><span style="letter-spacing:0.5px">-&gt; </span><span style="letter-spacing:-0.6px">AGS_PARID</span></div>
<div style="position:absolute;left:29px;top:371px;width:1px;height:1px;background:#b8b8b8"></div>
<div style="position:absolute;left:31px;top:371px;width:1px;height:1px;background:#b8b8b8"></div>
<div style="position:absolute;left:33px;top:371px;width:1px;height:1px;background:#b8b8b8"></div>
<div style="position:absolute;left:35px;top:371px;width:1px;height:1px;background:#b8b8b8"></div>
<div style="position:absolute;left:37px;top:371px;width:1px;height:1px;background:#b8b8b8"></div>
<svg style="position:absolute;left:44px;top:367px" width="8" height="8" viewBox="0 0 8 8"><circle cx="3.7" cy="3.7" r="3.4" fill="url(#gball)"/></svg>
<div style="position:absolute;left:60.60000000000002px;top:380.84px;font-size:12px;color:#000;">Parent sample reference</div>
<div style="position:absolute;left:503.4px;top:380.84px;font-size:12px;color:#000;"><span style="letter-spacing:0.5px">-&gt; </span><span style="letter-spacing:-0.6px">PARENTGUID</span></div>
<div style="position:absolute;left:29px;top:390px;width:1px;height:1px;background:#b8b8b8"></div>
<div style="position:absolute;left:31px;top:390px;width:1px;height:1px;background:#b8b8b8"></div>
<div style="position:absolute;left:33px;top:390px;width:1px;height:1px;background:#b8b8b8"></div>
<div style="position:absolute;left:35px;top:390px;width:1px;height:1px;background:#b8b8b8"></div>
<div style="position:absolute;left:37px;top:390px;width:1px;height:1px;background:#b8b8b8"></div>
<svg style="position:absolute;left:44px;top:386px" width="8" height="8" viewBox="0 0 8 8"><circle cx="3.7" cy="3.7" r="3.4" fill="url(#gball)"/></svg>
<div style="position:absolute;left:60.60000000000002px;top:399.84px;font-size:12px;color:#000;">Penetration</div>
<div style="position:absolute;left:503.4px;top:399.84px;font-size:12px;color:#000;"><span style="letter-spacing:0.5px">-&gt; </span><span style="letter-spacing:-0.6px">PENETR</span></div>
<div style="position:absolute;left:703.2px;top:399.84px;font-size:12px;color:#000;">cm</div>
<div style="position:absolute;left:29px;top:409px;width:1px;height:1px;background:#b8b8b8"></div>
<div style="position:absolute;left:31px;top:409px;width:1px;height:1px;background:#b8b8b8"></div>
<div style="position:absolute;left:33px;top:409px;width:1px;height:1px;background:#b8b8b8"></div>
<div style="position:absolute;left:35px;top:409px;width:1px;height:1px;background:#b8b8b8"></div>
<div style="position:absolute;left:37px;top:409px;width:1px;height:1px;background:#b8b8b8"></div>
<svg style="position:absolute;left:44px;top:405px" width="8" height="8" viewBox="0 0 8 8"><circle cx="3.7" cy="3.7" r="3.4" fill="url(#gball)"/></svg>
<div style="position:absolute;left:60.60000000000002px;top:418.84px;font-size:12px;color:#000;">Penetration from</div>
<div style="position:absolute;left:503.4px;top:418.84px;font-size:12px;color:#000;"><span style="letter-spacing:0.5px">-&gt; </span><span style="letter-spacing:-0.6px">PENBEG</span></div>
<div style="position:absolute;left:703.2px;top:418.84px;font-size:12px;color:#000;">m</div>
<div style="position:absolute;left:29px;top:428px;width:1px;height:1px;background:#b8b8b8"></div>
<div style="position:absolute;left:31px;top:428px;width:1px;height:1px;background:#b8b8b8"></div>
<div style="position:absolute;left:33px;top:428px;width:1px;height:1px;background:#b8b8b8"></div>
<div style="position:absolute;left:35px;top:428px;width:1px;height:1px;background:#b8b8b8"></div>
<div style="position:absolute;left:37px;top:428px;width:1px;height:1px;background:#b8b8b8"></div>
<svg style="position:absolute;left:44px;top:424px" width="8" height="8" viewBox="0 0 8 8"><circle cx="3.7" cy="3.7" r="3.4" fill="url(#gball)"/></svg>
<div style="position:absolute;left:60.60000000000002px;top:437.84px;font-size:12px;color:#000;">Penetration to</div>
<div style="position:absolute;left:503.4px;top:437.84px;font-size:12px;color:#000;"><span style="letter-spacing:0.5px">-&gt; </span><span style="letter-spacing:-0.6px">INVPEN</span></div>
<div style="position:absolute;left:703.2px;top:437.84px;font-size:12px;color:#000;">m</div>
<div style="position:absolute;left:29px;top:447px;width:1px;height:1px;background:#b8b8b8"></div>
<div style="position:absolute;left:31px;top:447px;width:1px;height:1px;background:#b8b8b8"></div>
<div style="position:absolute;left:33px;top:447px;width:1px;height:1px;background:#b8b8b8"></div>
<div style="position:absolute;left:35px;top:447px;width:1px;height:1px;background:#b8b8b8"></div>
<div style="position:absolute;left:37px;top:447px;width:1px;height:1px;background:#b8b8b8"></div>
<svg style="position:absolute;left:44px;top:443px" width="8" height="8" viewBox="0 0 8 8"><circle cx="3.7" cy="3.7" r="3.4" fill="url(#gball)"/></svg>
<div style="position:absolute;left:60.60000000000002px;top:456.84px;font-size:12px;color:#000;">Recovery</div>
<div style="position:absolute;left:503.4px;top:456.84px;font-size:12px;color:#000;"><span style="letter-spacing:0.5px">-&gt; </span><span style="letter-spacing:-0.6px">INVLENGTH</span></div>
<div style="position:absolute;left:703.2px;top:456.84px;font-size:12px;color:#000;">cm</div>
<div style="position:absolute;left:29px;top:466px;width:1px;height:1px;background:#b8b8b8"></div>
<div style="position:absolute;left:31px;top:466px;width:1px;height:1px;background:#b8b8b8"></div>
<div style="position:absolute;left:33px;top:466px;width:1px;height:1px;background:#b8b8b8"></div>
<div style="position:absolute;left:35px;top:466px;width:1px;height:1px;background:#b8b8b8"></div>
<div style="position:absolute;left:37px;top:466px;width:1px;height:1px;background:#b8b8b8"></div>
<svg style="position:absolute;left:44px;top:462px" width="8" height="8" viewBox="0 0 8 8"><circle cx="3.7" cy="3.7" r="3.4" fill="url(#gball)"/></svg>
<div style="position:absolute;left:60.60000000000002px;top:475.84px;font-size:12px;color:#000;">Recovery from</div>
<div style="position:absolute;left:503.4px;top:475.84px;font-size:12px;color:#000;"><span style="letter-spacing:0.5px">-&gt; </span><span style="letter-spacing:-0.6px">INVZBEG</span></div>
<div style="position:absolute;left:703.2px;top:475.84px;font-size:12px;color:#000;">m</div>
<div style="position:absolute;left:29px;top:485px;width:1px;height:1px;background:#b8b8b8"></div>
<div style="position:absolute;left:31px;top:485px;width:1px;height:1px;background:#b8b8b8"></div>
<div style="position:absolute;left:33px;top:485px;width:1px;height:1px;background:#b8b8b8"></div>
<div style="position:absolute;left:35px;top:485px;width:1px;height:1px;background:#b8b8b8"></div>
<div style="position:absolute;left:37px;top:485px;width:1px;height:1px;background:#b8b8b8"></div>
<svg style="position:absolute;left:44px;top:481px" width="8" height="8" viewBox="0 0 8 8"><circle cx="3.7" cy="3.7" r="3.4" fill="url(#gball)"/></svg>
<div style="position:absolute;left:60.60000000000002px;top:494.84px;font-size:12px;color:#000;">Recovery to</div>
<div style="position:absolute;left:503.4px;top:494.84px;font-size:12px;color:#000;"><span style="letter-spacing:0.5px">-&gt; </span><span style="letter-spacing:-0.6px">INVZEND</span></div>
<div style="position:absolute;left:703.2px;top:494.84px;font-size:12px;color:#000;">m</div>
<div style="position:absolute;left:29px;top:504px;width:1px;height:1px;background:#b8b8b8"></div>
<div style="position:absolute;left:31px;top:504px;width:1px;height:1px;background:#b8b8b8"></div>
<div style="position:absolute;left:33px;top:504px;width:1px;height:1px;background:#b8b8b8"></div>
<div style="position:absolute;left:35px;top:504px;width:1px;height:1px;background:#b8b8b8"></div>
<div style="position:absolute;left:37px;top:504px;width:1px;height:1px;background:#b8b8b8"></div>
<svg style="position:absolute;left:44px;top:500px" width="8" height="8" viewBox="0 0 8 8"><circle cx="3.7" cy="3.7" r="3.4" fill="url(#gball)"/></svg>
<div style="position:absolute;left:60.60000000000002px;top:513.84px;font-size:12px;color:#000;">Return flush</div>
<div style="position:absolute;left:503.4px;top:513.84px;font-size:12px;color:#000;"><span style="letter-spacing:0.5px">-&gt; </span><span style="letter-spacing:-0.6px">RETFLUSH</span></div>
<div style="position:absolute;left:703.2px;top:513.84px;font-size:12px;color:#000;">%</div>
<div style="position:absolute;left:29px;top:523px;width:1px;height:1px;background:#b8b8b8"></div>
<div style="position:absolute;left:31px;top:523px;width:1px;height:1px;background:#b8b8b8"></div>
<div style="position:absolute;left:33px;top:523px;width:1px;height:1px;background:#b8b8b8"></div>
<div style="position:absolute;left:35px;top:523px;width:1px;height:1px;background:#b8b8b8"></div>
<div style="position:absolute;left:37px;top:523px;width:1px;height:1px;background:#b8b8b8"></div>
<svg style="position:absolute;left:44px;top:519px" width="8" height="8" viewBox="0 0 8 8"><circle cx="3.7" cy="3.7" r="3.4" fill="url(#gball)"/></svg>
<div style="position:absolute;left:60.60000000000002px;top:532.84px;font-size:12px;color:#000;">Sample code</div>
<div style="position:absolute;left:503.4px;top:532.84px;font-size:12px;color:#000;"><span style="letter-spacing:0.5px">-&gt; </span><span style="letter-spacing:-0.6px">SMPCODE</span></div>
<div style="position:absolute;left:29px;top:542px;width:1px;height:1px;background:#b8b8b8"></div>
<div style="position:absolute;left:31px;top:542px;width:1px;height:1px;background:#b8b8b8"></div>
<div style="position:absolute;left:33px;top:542px;width:1px;height:1px;background:#b8b8b8"></div>
<div style="position:absolute;left:35px;top:542px;width:1px;height:1px;background:#b8b8b8"></div>
<div style="position:absolute;left:37px;top:542px;width:1px;height:1px;background:#b8b8b8"></div>
<svg style="position:absolute;left:44px;top:538px" width="8" height="8" viewBox="0 0 8 8"><circle cx="3.7" cy="3.7" r="3.4" fill="url(#gball)"/></svg>
<div style="position:absolute;left:60.60000000000002px;top:551.84px;font-size:12px;color:#000;">Sample condition</div>
<div style="position:absolute;left:503.4px;top:551.84px;font-size:12px;color:#000;"><span style="letter-spacing:0.5px">-&gt; </span><span style="letter-spacing:-0.6px">SAMPCOND</span></div>
<div style="position:absolute;left:29px;top:561px;width:1px;height:1px;background:#b8b8b8"></div>
<div style="position:absolute;left:31px;top:561px;width:1px;height:1px;background:#b8b8b8"></div>
<div style="position:absolute;left:33px;top:561px;width:1px;height:1px;background:#b8b8b8"></div>
<div style="position:absolute;left:35px;top:561px;width:1px;height:1px;background:#b8b8b8"></div>
<div style="position:absolute;left:37px;top:561px;width:1px;height:1px;background:#b8b8b8"></div>
<svg style="position:absolute;left:44px;top:557px" width="8" height="8" viewBox="0 0 8 8"><circle cx="3.7" cy="3.7" r="3.4" fill="url(#gball)"/></svg>
<div style="position:absolute;left:60.60000000000002px;top:570.84px;font-size:12px;color:#000;">Sample description</div>
<div style="position:absolute;left:503.4px;top:570.84px;font-size:12px;color:#000;"><span style="letter-spacing:0.5px">-&gt; </span><span style="letter-spacing:-0.6px">DESCR</span></div>
<div style="position:absolute;left:29px;top:580px;width:1px;height:1px;background:#b8b8b8"></div>
<div style="position:absolute;left:31px;top:580px;width:1px;height:1px;background:#b8b8b8"></div>
<div style="position:absolute;left:33px;top:580px;width:1px;height:1px;background:#b8b8b8"></div>
<div style="position:absolute;left:35px;top:580px;width:1px;height:1px;background:#b8b8b8"></div>
<div style="position:absolute;left:37px;top:580px;width:1px;height:1px;background:#b8b8b8"></div>
<svg style="position:absolute;left:44px;top:576px" width="8" height="8" viewBox="0 0 8 8"><circle cx="3.7" cy="3.7" r="3.4" fill="url(#gball)"/></svg>
<div style="position:absolute;left:60.60000000000002px;top:589.84px;font-size:12px;color:#000;">Sample <span style="letter-spacing:-0.6px">ID</span></div>
<div style="position:absolute;left:503.4px;top:589.84px;font-size:12px;color:#000;"><span style="letter-spacing:0.5px">-&gt; </span><span style="letter-spacing:-0.6px">AGS_SAMPID</span></div>
<div style="position:absolute;left:29px;top:599px;width:1px;height:1px;background:#b8b8b8"></div>
<div style="position:absolute;left:31px;top:599px;width:1px;height:1px;background:#b8b8b8"></div>
<div style="position:absolute;left:33px;top:599px;width:1px;height:1px;background:#b8b8b8"></div>
<div style="position:absolute;left:35px;top:599px;width:1px;height:1px;background:#b8b8b8"></div>
<div style="position:absolute;left:37px;top:599px;width:1px;height:1px;background:#b8b8b8"></div>
<svg style="position:absolute;left:44px;top:595px" width="8" height="8" viewBox="0 0 8 8"><circle cx="3.7" cy="3.7" r="3.4" fill="url(#gball)"/></svg>
<div style="position:absolute;left:60.60000000000002px;top:608.84px;font-size:12px;color:#000;">Sample reference</div>
<div style="position:absolute;left:503.4px;top:608.84px;font-size:12px;color:#000;"><span style="letter-spacing:0.5px">-&gt; </span><span style="letter-spacing:-0.6px">INVNAME</span></div>
<div style="position:absolute;left:29px;top:618px;width:1px;height:1px;background:#b8b8b8"></div>
<div style="position:absolute;left:31px;top:618px;width:1px;height:1px;background:#b8b8b8"></div>
<div style="position:absolute;left:33px;top:618px;width:1px;height:1px;background:#b8b8b8"></div>
<div style="position:absolute;left:35px;top:618px;width:1px;height:1px;background:#b8b8b8"></div>
<div style="position:absolute;left:37px;top:618px;width:1px;height:1px;background:#b8b8b8"></div>
<svg style="position:absolute;left:44px;top:614px" width="8" height="8" viewBox="0 0 8 8"><circle cx="3.7" cy="3.7" r="3.4" fill="url(#gball)"/></svg>
<div style="position:absolute;left:60.60000000000002px;top:627.84px;font-size:12px;color:#000;">Sample temperature</div>
<div style="position:absolute;left:503.4px;top:627.84px;font-size:12px;color:#000;"><span style="letter-spacing:0.5px">-&gt; </span><span style="letter-spacing:-0.6px">SAMPTEMP</span></div>
<div style="position:absolute;left:703.2px;top:627.84px;font-size:12px;color:#000;">°C</div>
<div style="position:absolute;left:29px;top:637px;width:1px;height:1px;background:#b8b8b8"></div>
<div style="position:absolute;left:31px;top:637px;width:1px;height:1px;background:#b8b8b8"></div>
<div style="position:absolute;left:33px;top:637px;width:1px;height:1px;background:#b8b8b8"></div>
<div style="position:absolute;left:35px;top:637px;width:1px;height:1px;background:#b8b8b8"></div>
<div style="position:absolute;left:37px;top:637px;width:1px;height:1px;background:#b8b8b8"></div>
<svg style="position:absolute;left:44px;top:633px" width="8" height="8" viewBox="0 0 8 8"><circle cx="3.7" cy="3.7" r="3.4" fill="url(#gball)"/></svg>
<div style="position:absolute;left:60.60000000000002px;top:646.84px;font-size:12px;color:#000;">Sample tube / Test probe</div>
<div style="position:absolute;left:503.4px;top:646.84px;font-size:12px;color:#000;"><span style="letter-spacing:0.5px">-&gt; </span><span style="letter-spacing:-0.6px">SAMPROBE</span></div>
<div style="position:absolute;left:29px;top:656px;width:1px;height:1px;background:#b8b8b8"></div>
<div style="position:absolute;left:31px;top:656px;width:1px;height:1px;background:#b8b8b8"></div>
<div style="position:absolute;left:33px;top:656px;width:1px;height:1px;background:#b8b8b8"></div>
<div style="position:absolute;left:35px;top:656px;width:1px;height:1px;background:#b8b8b8"></div>
<div style="position:absolute;left:37px;top:656px;width:1px;height:1px;background:#b8b8b8"></div>
<svg style="position:absolute;left:44px;top:652px" width="8" height="8" viewBox="0 0 8 8"><circle cx="3.7" cy="3.7" r="3.4" fill="url(#gball)"/></svg>
<div style="position:absolute;left:60.60000000000002px;top:665.84px;font-size:12px;color:#000;">Sample type</div>
<div style="position:absolute;left:503.4px;top:665.84px;font-size:12px;color:#000;"><span style="letter-spacing:0.5px">-&gt; </span><span style="letter-spacing:-0.6px">SAMPTYPE</span></div>
<div style="position:absolute;left:29px;top:675px;width:1px;height:1px;background:#b8b8b8"></div>
<div style="position:absolute;left:31px;top:675px;width:1px;height:1px;background:#b8b8b8"></div>
<div style="position:absolute;left:33px;top:675px;width:1px;height:1px;background:#b8b8b8"></div>
<div style="position:absolute;left:35px;top:675px;width:1px;height:1px;background:#b8b8b8"></div>
<div style="position:absolute;left:37px;top:675px;width:1px;height:1px;background:#b8b8b8"></div>
<svg style="position:absolute;left:44px;top:671px" width="8" height="8" viewBox="0 0 8 8"><circle cx="3.7" cy="3.7" r="3.4" fill="url(#gball)"/></svg>
<div style="position:absolute;left:60.60000000000002px;top:684.84px;font-size:12px;color:#000;"><span style="letter-spacing:-0.6px">ZL</span> drift fs</div>
<div style="position:absolute;left:503.4px;top:684.84px;font-size:12px;color:#000;"><span style="letter-spacing:0.5px">-&gt; </span><span style="letter-spacing:-0.6px">ZLDFS</span></div>
<div style="position:absolute;left:703.2px;top:684.84px;font-size:12px;color:#000;"><span style="letter-spacing:-0.6px">MP</span>a</div>
<div style="position:absolute;left:29px;top:694px;width:1px;height:1px;background:#b8b8b8"></div>
<div style="position:absolute;left:31px;top:694px;width:1px;height:1px;background:#b8b8b8"></div>
<div style="position:absolute;left:33px;top:694px;width:1px;height:1px;background:#b8b8b8"></div>
<div style="position:absolute;left:35px;top:694px;width:1px;height:1px;background:#b8b8b8"></div>
<div style="position:absolute;left:37px;top:694px;width:1px;height:1px;background:#b8b8b8"></div>
<svg style="position:absolute;left:44px;top:690px" width="8" height="8" viewBox="0 0 8 8"><circle cx="3.7" cy="3.7" r="3.4" fill="url(#gball)"/></svg>
<div style="position:absolute;left:60.60000000000002px;top:703.84px;font-size:12px;color:#000;"><span style="letter-spacing:-0.6px">ZL</span> drift qc</div>
<div style="position:absolute;left:503.4px;top:703.84px;font-size:12px;color:#000;"><span style="letter-spacing:0.5px">-&gt; </span><span style="letter-spacing:-0.6px">ZLDQC</span></div>
<div style="position:absolute;left:703.2px;top:703.84px;font-size:12px;color:#000;"><span style="letter-spacing:-0.6px">MP</span>a</div>
<div style="position:absolute;left:29px;top:713px;width:1px;height:1px;background:#b8b8b8"></div>
<div style="position:absolute;left:31px;top:713px;width:1px;height:1px;background:#b8b8b8"></div>
<div style="position:absolute;left:33px;top:713px;width:1px;height:1px;background:#b8b8b8"></div>
<div style="position:absolute;left:35px;top:713px;width:1px;height:1px;background:#b8b8b8"></div>
<div style="position:absolute;left:37px;top:713px;width:1px;height:1px;background:#b8b8b8"></div>
<svg style="position:absolute;left:44px;top:709px" width="8" height="8" viewBox="0 0 8 8"><circle cx="3.7" cy="3.7" r="3.4" fill="url(#gball)"/></svg>
<div style="position:absolute;left:10px;top:14px;width:1px;height:10px;background:repeating-linear-gradient(#b8b8b8 0 1px,transparent 1px 2px)"></div>
<div style="position:absolute;left:10px;top:33px;width:1px;height:678px;background:repeating-linear-gradient(#d0d0d0 0 1px,transparent 1px 2px)"></div>
<div style="position:absolute;left:29px;top:34px;width:1px;height:677px;background:repeating-linear-gradient(#b8b8b8 0 1px,transparent 1px 2px)"></div>
<div style="position:absolute;left:16px;top:10px;width:1px;height:1px;background:#b8b8b8"></div>
<div style="position:absolute;left:18px;top:10px;width:1px;height:1px;background:#b8b8b8"></div>
<div style="position:absolute;left:20px;top:10px;width:1px;height:1px;background:#b8b8b8"></div>
<div style="position:absolute;left:22px;top:10px;width:1px;height:1px;background:#b8b8b8"></div>
<div style="position:absolute;left:16px;top:29px;width:1px;height:1px;background:#b8b8b8"></div>
<div style="position:absolute;left:18px;top:29px;width:1px;height:1px;background:#b8b8b8"></div>
<div style="position:absolute;left:20px;top:29px;width:1px;height:1px;background:#b8b8b8"></div>
<div style="position:absolute;left:6px;top:5px;width:9px;height:9px;background:#f4f4f4;border:1px solid #909090;box-sizing:border-box"></div>
<div style="position:absolute;left:8px;top:9px;width:5px;height:1px;background:#202070"></div>
<div style="position:absolute;left:10px;top:7px;width:1px;height:5px;background:#202070"></div>
<div style="position:absolute;left:6px;top:24px;width:9px;height:9px;background:#f4f4f4;border:1px solid #909090;box-sizing:border-box"></div>
<div style="position:absolute;left:8px;top:28px;width:5px;height:1px;background:#202070"></div>
<svg style="position:absolute;left:24px;top:4px" width="11" height="11" viewBox="0 0 11 11"><circle cx="5.3" cy="5.3" r="5" fill="url(#gball)"/></svg>
<svg style="position:absolute;left:22px;top:22px" width="14" height="12" viewBox="0 0 14 12"><path d="M0.5 10.5H13M2 10.5V6H6V10.5M8.5 10.5V1H12" fill="none" stroke="#1a4a80" stroke-width="1.1"/><rect x="2.5" y="6.5" width="3" height="4" fill="#9cc4e8"/></svg>
</div>
<div style="position:absolute;left:432.3px;top:917.34px;font-size:12px;color:#000;">Search:</div>
<div style="position:absolute;left:476px;top:916px;width:91px;height:22px;background:#fff;border:1px solid #f9f9f9;border-radius:2px 2px 0 0;border-bottom:1px solid #8a8a8a;box-sizing:border-box"></div>
<div style="position:absolute;left:1166px;top:915px;width:88px;height:21px;background:#f8f8f8;border:1px solid #e6e6e6;border-radius:3px;box-sizing:border-box"></div>
<div style="position:absolute;left:1201px;top:916.84px;font-size:12px;color:#a0a0a0;"><span style="letter-spacing:-0.6px">OK</span></div>
<div style="position:absolute;left:1262px;top:915px;width:89px;height:21px;background:#fdfdfd;border:1px solid #d0d0d0;border-radius:3px;box-sizing:border-box"></div>
<div style="position:absolute;left:1287.5px;top:916.84px;font-size:12px;color:#000;">Cancel</div>
<div style="position:absolute;left:423px;top:943px;width:939px;height:1px;background:#e0e0e0"></div>
<div style="position:absolute;left:1357px;top:950px;width:2px;height:2px;background:#b8b8b8"></div>
<div style="position:absolute;left:1354px;top:953px;width:2px;height:2px;background:#b8b8b8"></div>
<div style="position:absolute;left:1357px;top:953px;width:2px;height:2px;background:#b8b8b8"></div>
<div style="position:absolute;left:1351px;top:956px;width:2px;height:2px;background:#b8b8b8"></div>
<div style="position:absolute;left:1354px;top:956px;width:2px;height:2px;background:#b8b8b8"></div>
<div style="position:absolute;left:1357px;top:956px;width:2px;height:2px;background:#b8b8b8"></div>
<div style="position:absolute;left:0px;top:1267px;width:1365px;height:35px;background:#f0f0f0"></div>
<div style="position:absolute;left:0px;top:1267px;width:1365px;height:1px;background:#a0a0a0"></div>
<div style="position:absolute;left:0px;top:1268px;width:1365px;height:1px;background:#fff"></div>
<div style="position:absolute;left:269px;top:1270px;width:1px;height:32px;background:#d8d8d8"></div>
<div style="position:absolute;left:419px;top:1270px;width:1px;height:32px;background:#d8d8d8"></div>
<div style="position:absolute;left:569px;top:1270px;width:1px;height:32px;background:#d8d8d8"></div>
<div style="position:absolute;left:669px;top:1270px;width:1px;height:32px;background:#d8d8d8"></div>
<div style="position:absolute;left:39px;top:1271.5px;width:192px;text-align:center;font-size:12px;line-height:15px">Data sequence<br>Layer 1</div>
<div style="position:absolute;left:276.3px;top:1271.5px;font-size:12px;line-height:15px">Pos X: 12.57 cm<br>Pos Y: 2.32 cm</div>
<div style="position:absolute;left:426.4px;top:1271.5px;font-size:12px;line-height:15px">Width: 9.38 cm<br>Height: 27.39 cm</div>
<div style="position:absolute;left:575.8px;top:1270.04px;font-size:12px;color:#000;">Movable</div>
<div style="position:absolute;left:676.3px;top:1270.04px;font-size:12px;color:#000;">Layer 1</div>
<svg style="position:absolute;left:0;top:0" width="1365" height="1302" viewBox="0 0 1365 1302"><rect x="470" y="669" width="705" height="41" fill="none" stroke="#e31e24" stroke-width="4"/><rect x="374" y="925" width="27.5" height="81" fill="none" stroke="#e31e24" stroke-width="4"/><line x1="384.5" y1="920" x2="458" y2="728" stroke="#e31e24" stroke-width="4"/><path d="M466 712L449.5 726L468 733Z" fill="#e31e24"/></svg>

</body></html>
